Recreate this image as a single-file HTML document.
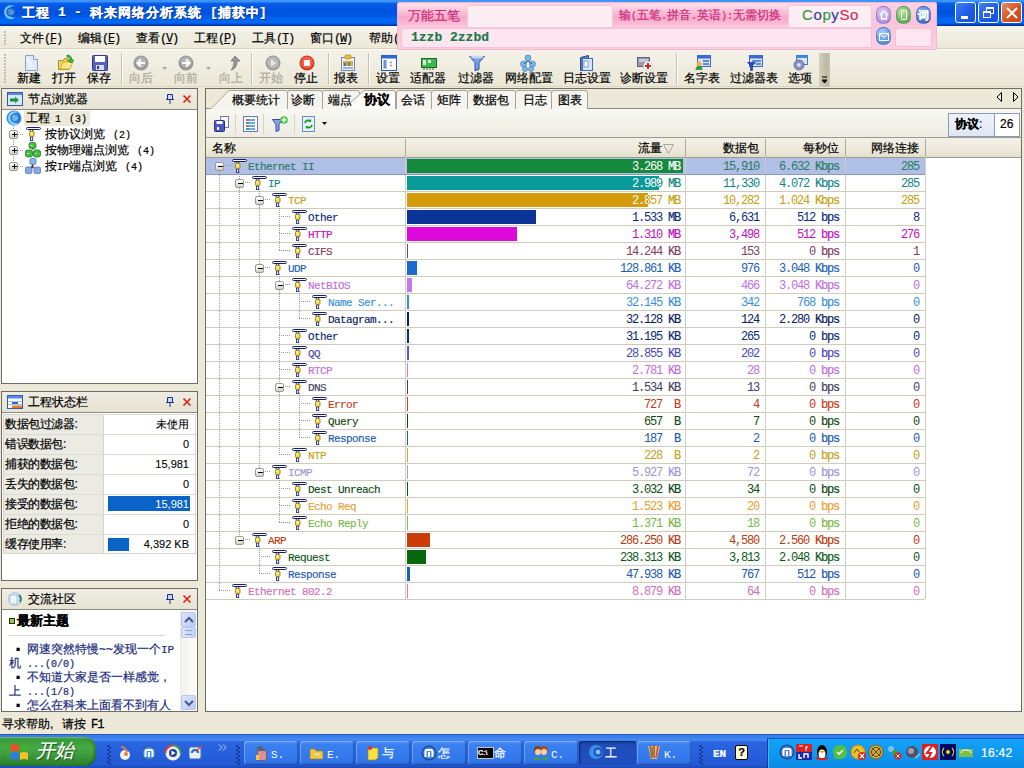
<!DOCTYPE html><html><head><meta charset="utf-8"><style>
*{margin:0;padding:0;box-sizing:border-box}
html,body{width:1024px;height:768px;overflow:hidden;background:#ece9d8;font-family:"Liberation Sans",sans-serif;font-size:12px;color:#000;position:relative;-webkit-text-stroke-width:0.2px}
.a{position:absolute;white-space:nowrap}
.m{font-family:"Liberation Mono",monospace;font-size:10px}
svg{position:absolute;overflow:visible}
.g{font-family:"Liberation Mono",monospace;font-size:12px;letter-spacing:-1.2px;-webkit-text-stroke-width:0}
.u{-webkit-text-stroke-width:0.2px}
.tn{font-family:"Liberation Mono",monospace;font-size:11px;letter-spacing:-0.6px;-webkit-text-stroke-width:0.15px}
</style></head><body><div class="a" style="left:0px;top:0px;width:1024px;height:27px;background:linear-gradient(#3c98fc 0px,#3a92fa 1.5px,#0a5ee8 3.5px,#0058e4 6px,#0052dc 13px,#005ae6 16px,#0066f2 19px,#0068f4 23px,#0044c8 24.5px,#0a2e98 26px,#f2f4ec 26px,#f2f4ec 27px)"></div>
<svg style="left:2px;top:4px" width="16" height="16" viewBox="0 0 16 16"><path d="M13 2.5A7 7 0 1 0 14 13A5.6 5.6 0 1 1 13 2.5z" fill="#6ac0fa"/><circle cx="9" cy="8" r="4.6" fill="#1a50c0"/><circle cx="9" cy="8" r="3.6" fill="#3a80e0"/><path d="M7 6.5h1.5M9 8.5h2M7.5 10h1" stroke="#90d0ff" stroke-width="1.2"/></svg>
<div class="a" style="left:22px;top:5px;font-size:13px;font-weight:bold;color:#fff;line-height:16px;text-shadow:1px 1px 0 #0a2a80;letter-spacing:1px">工程</div>
<div class="a" style="left:58px;top:5px;font-size:13px;font-weight:bold;color:#fff;line-height:16px;text-shadow:1px 1px 0 #0a2a80;font-family:'Liberation Mono',monospace;font-size:13px">1</div>
<div class="a" style="left:74px;top:5px;font-size:13px;font-weight:bold;color:#fff;line-height:16px;text-shadow:1px 1px 0 #0a2a80;font-family:'Liberation Mono',monospace;font-size:13px">-</div>
<div class="a" style="left:90px;top:5px;font-size:13px;font-weight:bold;color:#fff;line-height:16px;text-shadow:1px 1px 0 #0a2a80;letter-spacing:1px">科来网络分析系统</div>
<div class="a" style="left:210px;top:5px;font-size:13px;font-weight:bold;color:#fff;line-height:16px;text-shadow:1px 1px 0 #0a2a80;font-family:'Liberation Mono',monospace;font-size:13px">[</div>
<div class="a" style="left:218px;top:5px;font-size:13px;font-weight:bold;color:#fff;line-height:16px;text-shadow:1px 1px 0 #0a2a80;letter-spacing:1px">捕获中</div>
<div class="a" style="left:259px;top:5px;font-size:13px;font-weight:bold;color:#fff;line-height:16px;text-shadow:1px 1px 0 #0a2a80;font-family:'Liberation Mono',monospace;font-size:13px">]</div>
<div class="a" style="left:955px;top:2px;width:21px;height:21px;border:1px solid #fff;border-radius:3px;background:linear-gradient(135deg,#3c7ef8,#1c5ae8 60%,#1a50d8)"><div class="a" style="left:5px;top:13px;width:7px;height:3px;background:#fff"></div></div>
<div class="a" style="left:978px;top:2px;width:21px;height:21px;border:1px solid #fff;border-radius:3px;background:linear-gradient(135deg,#3c7ef8,#1c5ae8 60%,#1a50d8)"><div class="a" style="left:7px;top:4px;width:8px;height:7px;border:1px solid #fff;border-top-width:2px"></div><div class="a" style="left:4px;top:8px;width:8px;height:7px;border:1px solid #fff;border-top-width:2px;background:#2a62e8"></div></div>
<div class="a" style="left:1001px;top:2px;width:21px;height:21px;border:1px solid #fff;border-radius:3px;background:linear-gradient(135deg,#e88a6a,#d8521e 55%,#c84a18)"><svg style="left:4px;top:4px" width="12" height="12"><path d="M1 1L11 11M11 1L1 11" stroke="#fff" stroke-width="2"/></svg></div>
<div class="a" style="left:0px;top:27px;width:1024px;height:22px;background:linear-gradient(#f8f7f0,#f0eee2 30%,#ece9d8)"></div>
<div class="a" style="left:0px;top:48px;width:1024px;height:1px;background:#d8d4c2"></div>
<div class="a" style="left:0px;top:49px;width:1024px;height:1px;background:#fbfaf4"></div>
<div class="a" style="left:4px;top:31px;width:2px;height:2px;background:#c1bfb3"></div>
<div class="a" style="left:4px;top:34px;width:2px;height:2px;background:#c1bfb3"></div>
<div class="a" style="left:4px;top:37px;width:2px;height:2px;background:#c1bfb3"></div>
<div class="a" style="left:4px;top:40px;width:2px;height:2px;background:#c1bfb3"></div>
<div class="a" style="left:4px;top:43px;width:2px;height:2px;background:#c1bfb3"></div>
<div class="a" style="left:20px;top:31px;line-height:14px">文件<span class="m" style="font-size:12px;letter-spacing:-1.2px">(<u>F</u>)</span></div>
<div class="a" style="left:78px;top:31px;line-height:14px">编辑<span class="m" style="font-size:12px;letter-spacing:-1.2px">(<u>E</u>)</span></div>
<div class="a" style="left:136px;top:31px;line-height:14px">查看<span class="m" style="font-size:12px;letter-spacing:-1.2px">(<u>V</u>)</span></div>
<div class="a" style="left:194px;top:31px;line-height:14px">工程<span class="m" style="font-size:12px;letter-spacing:-1.2px">(<u>P</u>)</span></div>
<div class="a" style="left:252px;top:31px;line-height:14px">工具<span class="m" style="font-size:12px;letter-spacing:-1.2px">(<u>T</u>)</span></div>
<div class="a" style="left:310px;top:31px;line-height:14px">窗口<span class="m" style="font-size:12px;letter-spacing:-1.2px">(<u>W</u>)</span></div>
<div class="a" style="left:369px;top:31px;line-height:14px">帮助<span class="m" style="font-size:12px;letter-spacing:-1.2px">(<u>H</u>)</span></div>
<div class="a" style="left:0px;top:50px;width:1024px;height:38px;background:linear-gradient(#f4f2e8,#efecdf 50%,#eae7d5)"></div>
<div class="a" style="left:0px;top:86px;width:1024px;height:1px;background:#dcd8c6"></div>
<div class="a" style="left:4px;top:54px;width:2px;height:2px;background:#c1bfb3"></div>
<div class="a" style="left:4px;top:57px;width:2px;height:2px;background:#c1bfb3"></div>
<div class="a" style="left:4px;top:60px;width:2px;height:2px;background:#c1bfb3"></div>
<div class="a" style="left:4px;top:63px;width:2px;height:2px;background:#c1bfb3"></div>
<div class="a" style="left:4px;top:66px;width:2px;height:2px;background:#c1bfb3"></div>
<div class="a" style="left:4px;top:69px;width:2px;height:2px;background:#c1bfb3"></div>
<div class="a" style="left:4px;top:72px;width:2px;height:2px;background:#c1bfb3"></div>
<div class="a" style="left:4px;top:75px;width:2px;height:2px;background:#c1bfb3"></div>
<div class="a" style="left:4px;top:78px;width:2px;height:2px;background:#c1bfb3"></div>
<div class="a" style="left:4px;top:81px;width:2px;height:2px;background:#c1bfb3"></div>
<div class="a" style="left:121px;top:53px;width:1px;height:32px;background:#c5c2b2"></div>
<div class="a" style="left:122px;top:53px;width:1px;height:32px;background:#fff"></div>
<div class="a" style="left:251px;top:53px;width:1px;height:32px;background:#c5c2b2"></div>
<div class="a" style="left:252px;top:53px;width:1px;height:32px;background:#fff"></div>
<div class="a" style="left:328px;top:53px;width:1px;height:32px;background:#c5c2b2"></div>
<div class="a" style="left:329px;top:53px;width:1px;height:32px;background:#fff"></div>
<div class="a" style="left:368px;top:53px;width:1px;height:32px;background:#c5c2b2"></div>
<div class="a" style="left:369px;top:53px;width:1px;height:32px;background:#fff"></div>
<div class="a" style="left:676px;top:53px;width:1px;height:32px;background:#c5c2b2"></div>
<div class="a" style="left:677px;top:53px;width:1px;height:32px;background:#fff"></div>
<div class="a" style="left:819px;top:53px;width:11px;height:34px;background:linear-gradient(90deg,#d4d0bc,#bcb8a4 70%,#c8c4b0)"></div>
<svg style="left:821px;top:76px" width="8" height="8"><path d="M1 1h5M1 4l2.5 3l2.5-3z" stroke="#000" fill="#000" stroke-width="1"/></svg>
<svg style="left:23px;top:55px;" width="16" height="16" viewBox="0 0 16 16"><path d="M2.5 0.5h8l4 4v11h-12z" fill="#dfeaf8" stroke="#8aa0c8"/><path d="M10.5 0.5v4h4" fill="#fff" stroke="#8aa0c8"/><path d="M4 3l5 9" stroke="#fff" stroke-width="3" opacity=".6"/></svg>
<div class="a" style="left:17px;top:71px;line-height:14px;color:#000">新建</div>
<svg style="left:58px;top:55px;" width="16" height="16" viewBox="0 0 16 16"><path d="M0.5 5.5h5l1-2h3v3h4l-3 8h-10z" fill="#f2d35a" stroke="#b89020"/><path d="M2 14l3-7h10l-3 7z" fill="#f8e48a" stroke="#c8a030" stroke-width=".8"/><path d="M9 0c3 0 5 2 5 5h2l-3 3-3-3h2c0-2-1-3-3-3z" fill="#3cb83c" stroke="#1a7a1a" stroke-width=".6"/></svg>
<div class="a" style="left:52px;top:71px;line-height:14px;color:#000">打开</div>
<svg style="left:92px;top:55px;" width="16" height="16" viewBox="0 0 16 16"><rect x="0.5" y="0.5" width="15" height="15" rx="1" fill="#5860c0" stroke="#303890"/><rect x="3" y="1" width="10" height="6" fill="#fff"/><rect x="4" y="10" width="8" height="5" fill="#d8dcf0"/><rect x="5" y="11" width="2" height="3" fill="#303890"/></svg>
<div class="a" style="left:87px;top:71px;line-height:14px;color:#000">保存</div>
<svg style="left:133px;top:55px;opacity:.85;" width="16" height="16" viewBox="0 0 16 16"><circle cx="8" cy="8" r="7.5" fill="#8a8a8a"/><circle cx="8" cy="7" r="5.5" fill="#a8a8a8"/><path d="M12 8H5M8 4.5L4.5 8L8 11.5" stroke="#fff" stroke-width="2.2" fill="none"/></svg>
<div class="a" style="left:129px;top:71px;line-height:14px;color:#aca899">向后</div>
<svg style="left:178px;top:55px;opacity:.85;" width="16" height="16" viewBox="0 0 16 16"><circle cx="8" cy="8" r="7.5" fill="#8a8a8a"/><circle cx="8" cy="7" r="5.5" fill="#a8a8a8"/><path d="M4 8h7M8 4.5L11.5 8L8 11.5" stroke="#fff" stroke-width="2.2" fill="none"/></svg>
<div class="a" style="left:174px;top:71px;line-height:14px;color:#aca899">向前</div>
<svg style="left:225px;top:55px;opacity:.85;" width="16" height="16" viewBox="0 0 16 16"><path d="M10 1l5 5h-3c0 5-2 8-6 9 2-2 3-5 3-9H6z" fill="#8a8a8a" stroke="#505050" stroke-width=".7"/></svg>
<div class="a" style="left:219px;top:71px;line-height:14px;color:#aca899">向上</div>
<svg style="left:265px;top:55px;opacity:.85;" width="16" height="16" viewBox="0 0 16 16"><circle cx="8" cy="8" r="7.5" fill="#8c8c8c"/><circle cx="8" cy="7.5" r="6" fill="#b0b0b0"/><path d="M6 4.5v7l5.5-3.5z" fill="#e8e8e8"/></svg>
<div class="a" style="left:259px;top:71px;line-height:14px;color:#aca899">开始</div>
<svg style="left:299px;top:55px;" width="16" height="16" viewBox="0 0 16 16"><circle cx="8" cy="8" r="7.5" fill="#d83a20"/><circle cx="8" cy="7.5" r="6" fill="#f06040"/><rect x="5" y="5" width="6" height="6" fill="#fff" opacity=".95"/></svg>
<div class="a" style="left:294px;top:71px;line-height:14px;color:#000">停止</div>
<svg style="left:340px;top:55px;" width="16" height="16" viewBox="0 0 16 16"><rect x="1.5" y="2.5" width="13" height="13" fill="#eef4fc" stroke="#6a88b8"/><rect x="5" y="0" width="6" height="4" rx="1" fill="#f0c020" stroke="#a08010" stroke-width=".6"/><rect x="3" y="6" width="10" height="5" fill="#e8a050"/><rect x="4" y="8" width="2" height="3" fill="#4070d0"/><rect x="8" y="7" width="2" height="4" fill="#40a040"/><path d="M3 13h10" stroke="#4070c0"/></svg>
<div class="a" style="left:334px;top:71px;line-height:14px;color:#000">报表</div>
<svg style="left:381px;top:55px;" width="16" height="16" viewBox="0 0 16 16"><rect x="0.5" y="0.5" width="15" height="15" fill="#fff" stroke="#2a5ab8"/><rect x="0.5" y="0.5" width="15" height="3" fill="#2a6ad8"/><rect x="2" y="5" width="4" height="9" fill="#a8c8f0"/><path d="M3 6h2M3 8h2M3 10h2M3 12h2" stroke="#2a5ab8"/><path d="M9 7l2 1M9 10l2 1" stroke="#c04080"/></svg>
<div class="a" style="left:376px;top:71px;line-height:14px;color:#000">设置</div>
<svg style="left:421px;top:55px;" width="16" height="16" viewBox="0 0 16 16"><rect x="0.5" y="3.5" width="15" height="9" fill="#3cb84c" stroke="#1a6a2a"/><rect x="2" y="5" width="3" height="5" fill="#fff" opacity=".8"/><rect x="7" y="5" width="3" height="3" fill="#fff" opacity=".8"/><path d="M3 13v2M6 13v2M9 13v2M12 13v2" stroke="#1a6a2a"/></svg>
<div class="a" style="left:410px;top:71px;line-height:14px;color:#000">适配器</div>
<svg style="left:469px;top:55px;" width="16" height="16" viewBox="0 0 16 16"><path d="M0.5 1.5h15l-5.5 6v7l-4 1v-8z" fill="#7aa0e0" stroke="#2a4aa8"/><ellipse cx="8" cy="2" rx="7" ry="1.5" fill="#c8d8f8"/></svg>
<div class="a" style="left:458px;top:71px;line-height:14px;color:#000">过滤器</div>
<svg style="left:520px;top:55px;" width="16" height="16" viewBox="0 0 16 16"><circle cx="8" cy="3" r="3" fill="#7ab8e8" stroke="#3a70b0" stroke-width=".6"/><circle cx="3.5" cy="9" r="3" fill="#7ab8e8" stroke="#3a70b0" stroke-width=".6"/><circle cx="12.5" cy="9" r="3" fill="#7ab8e8" stroke="#3a70b0" stroke-width=".6"/><circle cx="5" cy="14" r="2.5" fill="#7ab8e8" stroke="#3a70b0" stroke-width=".6"/><circle cx="11" cy="14" r="2.5" fill="#7ab8e8" stroke="#3a70b0" stroke-width=".6"/><path d="M8 6L4 9M8 6l4 3" stroke="#305080"/></svg>
<div class="a" style="left:505px;top:71px;line-height:14px;color:#000">网络配置</div>
<svg style="left:578px;top:55px;" width="16" height="16" viewBox="0 0 16 16"><path d="M2.5 2.5l8-2v14l-8 1z" fill="#5a80c8" stroke="#2a4a90"/><rect x="4.5" y="3.5" width="10" height="12" fill="#d8e4f8" stroke="#4a6ab0"/><rect x="6" y="6" width="4" height="6" fill="#fff" stroke="#4a6ab0" stroke-width=".6"/></svg>
<div class="a" style="left:563px;top:71px;line-height:14px;color:#000">日志设置</div>
<svg style="left:637px;top:55px;" width="16" height="16" viewBox="0 0 16 16"><rect x="0.5" y="2.5" width="12" height="9" fill="#9898b0" stroke="#606080"/><rect x="2" y="4" width="9" height="3" fill="#c8c8d8"/><circle cx="11" cy="11" r="4.5" fill="#fff" stroke="#c0c0c0" stroke-width=".6"/><path d="M11 8v6M8 11h6" stroke="#e02020" stroke-width="2"/></svg>
<div class="a" style="left:620px;top:71px;line-height:14px;color:#000">诊断设置</div>
<svg style="left:695px;top:55px;" width="16" height="16" viewBox="0 0 16 16"><rect x="2.5" y="0.5" width="13" height="11" fill="#d8e4f8" stroke="#3a6ac8"/><rect x="2.5" y="0.5" width="13" height="3" fill="#3a6ad8"/><path d="M8 6h6M8 9h6" stroke="#3a6ac8" stroke-width="1.5"/><circle cx="4" cy="9" r="2.5" fill="#f0b040"/><path d="M0.5 15c0-3 1.5-4 3.5-4s3.5 1 3.5 4z" fill="#2aa040"/></svg>
<div class="a" style="left:684px;top:71px;line-height:14px;color:#000">名字表</div>
<svg style="left:747px;top:55px;" width="16" height="16" viewBox="0 0 16 16"><rect x="2.5" y="0.5" width="13" height="11" fill="#d8e4f8" stroke="#3a6ac8"/><rect x="2.5" y="0.5" width="13" height="3" fill="#3a6ad8"/><path d="M5 6h9M9 9h5" stroke="#3a6ac8" stroke-width="1.5"/><path d="M0.5 7.5h8l-3 3v5h-2v-5z" fill="#2a4ac8" stroke="#1a2a90" stroke-width=".6"/></svg>
<div class="a" style="left:730px;top:71px;line-height:14px;color:#000">过滤器表</div>
<svg style="left:792px;top:55px;" width="16" height="16" viewBox="0 0 16 16"><rect x="4.5" y="0.5" width="11" height="9" fill="#d8e8f8" stroke="#3a7ad8"/><rect x="4.5" y="0.5" width="11" height="2.5" fill="#3a8ae8"/><circle cx="7" cy="10" r="5" fill="#9090c8" stroke="#5a5a98" stroke-width=".8"/><circle cx="7" cy="10" r="1.8" fill="#e8e8f8"/></svg>
<div class="a" style="left:788px;top:71px;line-height:14px;color:#000">选项</div>
<svg style="left:162px;top:67px" width="6" height="4"><path d="M0 0h5l-2.5 3z" fill="#aca899"/></svg>
<svg style="left:206px;top:67px" width="6" height="4"><path d="M0 0h5l-2.5 3z" fill="#aca899"/></svg>
<div class="a" style="left:397px;top:2px;width:540px;height:48px;background:linear-gradient(#fbd3e3,#f9c4da 40%,#fbd0e2);border:1px solid #f4b8d0;border-radius:2px"></div>
<div class="a" style="left:398px;top:4px;width:69px;height:23px;background:linear-gradient(#fde0ec,#f7a9c9 60%,#fbc8dc)"></div>
<div class="a" style="left:408px;top:8px;font-size:13px;line-height:15px;color:#cc2a78">万能五笔</div>
<div class="a" style="left:467px;top:5px;width:146px;height:23px;background:#fdeef4;border:1px solid #f6c8da;border-radius:2px"></div>
<div class="a" style="left:613px;top:4px;width:175px;height:23px;background:linear-gradient(#fde0ec,#f7a9c9 60%,#fbc8dc)"></div>
<div class="a" style="left:619px;top:8px;font-size:12px;line-height:15px;color:#cc2a78">输<span class="m">(</span>五笔<span class="m">.</span>拼音<span class="m">.</span>英语<span class="m">):</span>无需切换</div>
<div class="a" style="left:788px;top:5px;width:84px;height:23px;background:#fdeef4;border:1px solid #f6c8da;border-radius:2px"></div>
<div class="a" style="left:802px;top:6px;font-size:15px;line-height:18px;letter-spacing:.6px"><span style="color:#3a9a3a">C</span><span style="color:#3a3ab0">o</span><span style="color:#3a9a3a">p</span><span style="color:#3a3ab0">y</span><span style="color:#d03050">S</span><span style="color:#d03050">o</span></div>
<div class="a" style="left:401px;top:28px;width:471px;height:20px;background:#fde6ef;border:1px solid #f6c0d6;border-radius:2px"></div>
<div class="a" style="left:411px;top:30px;font-family:'Liberation Mono',monospace;font-size:13px;font-weight:bold;line-height:15px;color:#1a7a4a">1zzb 2zzbd</div>
<div class="a" style="left:876px;top:6px;width:15px;height:18px;border-radius:7px;background:radial-gradient(circle at 40% 30%,#e0c8f8,#a080d8);border:1px solid rgba(80,80,160,.35)"><svg style="left:2px;top:3px" width="10" height="10"><path d="M1 5L5 1L9 5M2.5 4v5h5V4" stroke="#fff" stroke-width="1.4" fill="none"/></svg></div>
<div class="a" style="left:896px;top:6px;width:15px;height:18px;border-radius:7px;background:radial-gradient(circle at 40% 30%,#b8e8a0,#48a030);border:1px solid rgba(80,80,160,.35)"><div class="a" style="left:4px;top:3px;width:6px;height:10px;border:1.5px solid #fff;border-radius:1px"></div></div>
<div class="a" style="left:916px;top:6px;width:15px;height:18px;border-radius:7px;background:radial-gradient(circle at 40% 30%,#90b8f0,#2a5ab8);border:1px solid rgba(80,80,160,.35)"><div class="a" style="left:1px;top:1px;font-size:11px;line-height:14px;color:#fff;font-weight:bold">词</div></div>
<div class="a" style="left:876px;top:27px;width:15px;height:18px;border-radius:7px;background:radial-gradient(circle at 40% 30%,#a8d0f8,#3a7ad8);border:1px solid rgba(80,80,160,.35)"><svg style="left:2px;top:5px" width="10" height="8"><rect x=".5" y=".5" width="9" height="7" fill="none" stroke="#fff"/><path d="M.5 .5L5 4.5L9.5 .5" stroke="#fff" fill="none"/></svg></div>
<div class="a" style="left:895px;top:28px;width:37px;height:19px;background:#fde6ef;border:1px solid #f6c0d6;border-radius:2px"></div>
<div class="a" style="left:1px;top:88px;width:197px;height:296px;border:1px solid #6e6c64;background:#fff"></div>
<div class="a" style="left:2px;top:89px;width:195px;height:20px;background:linear-gradient(#efede3,#e6e3d3)"></div>
<div class="a" style="left:2px;top:109px;width:195px;height:1px;background:#8c8a7e"></div>
<svg style="left:7px;top:92px" width="16" height="14" viewBox="0 0 16 14"><rect x=".5" y=".5" width="15" height="13" fill="#d8e8f8" stroke="#3a5a98"/><rect x="1" y="1" width="14" height="2" fill="#5a8ad8"/><path d="M3 8h6" stroke="#1a8a3a" stroke-width="3"/><path d="M8 4.5l4 3.5-4 3.5z" fill="#1aa040"/></svg>
<div class="a" style="left:28px;top:92px;font-size:12px;line-height:14px;color:#000">节点浏览器</div>
<svg style="left:166px;top:94px" width="8" height="10"><path d="M1.5 .5h5v5h-5z" fill="#c8d8f0" stroke="#20308a"/><path d="M0 5.5h8M4 6v4" stroke="#20308a"/></svg>
<svg style="left:183px;top:95px" width="8" height="8"><path d="M.5 .5l7 7M7.5 .5l-7 7" stroke="#e02010" stroke-width="1.6"/></svg>
<div class="a" style="left:1px;top:391px;width:197px;height:190px;border:1px solid #6e6c64;background:#fff"></div>
<div class="a" style="left:2px;top:392px;width:195px;height:20px;background:linear-gradient(#efede3,#e6e3d3)"></div>
<div class="a" style="left:2px;top:412px;width:195px;height:1px;background:#8c8a7e"></div>
<svg style="left:7px;top:395px" width="16" height="14" viewBox="0 0 16 14"><rect x=".5" y=".5" width="15" height="13" fill="#fff" stroke="#3a5aa8"/><rect x="1" y="1" width="14" height="2.5" fill="#5a8ae8"/><path d="M1 6.5h14M1 9.5h14" stroke="#a8c0e8"/><rect x="5" y="7" width="6" height="2" fill="#2a6ad8"/><rect x="5" y="10.5" width="10" height="2.5" fill="#e87a20"/></svg>
<div class="a" style="left:28px;top:395px;font-size:12px;line-height:14px;color:#000">工程状态栏</div>
<svg style="left:166px;top:397px" width="8" height="10"><path d="M1.5 .5h5v5h-5z" fill="#c8d8f0" stroke="#20308a"/><path d="M0 5.5h8M4 6v4" stroke="#20308a"/></svg>
<svg style="left:183px;top:398px" width="8" height="8"><path d="M.5 .5l7 7M7.5 .5l-7 7" stroke="#e02010" stroke-width="1.6"/></svg>
<div class="a" style="left:1px;top:588px;width:197px;height:124px;border:1px solid #6e6c64;background:#fff"></div>
<div class="a" style="left:2px;top:589px;width:195px;height:20px;background:linear-gradient(#efede3,#e6e3d3)"></div>
<div class="a" style="left:2px;top:609px;width:195px;height:1px;background:#8c8a7e"></div>
<svg style="left:7px;top:592px" width="16" height="14" viewBox="0 0 16 14"><circle cx="8" cy="7" r="6.5" fill="#d0e0f8" stroke="#90b0d8" stroke-width=".6"/><rect x="3" y="3" width="7" height="9" fill="#f0f4fc" stroke="#8aa8d8" stroke-width=".6"/><path d="M12 3a6 6 0 0 1 1 7" stroke="#2a8a6a" stroke-width="2" fill="none"/></svg>
<div class="a" style="left:28px;top:592px;font-size:12px;line-height:14px;color:#000">交流社区</div>
<svg style="left:166px;top:594px" width="8" height="10"><path d="M1.5 .5h5v5h-5z" fill="#c8d8f0" stroke="#20308a"/><path d="M0 5.5h8M4 6v4" stroke="#20308a"/></svg>
<svg style="left:183px;top:595px" width="8" height="8"><path d="M.5 .5l7 7M7.5 .5l-7 7" stroke="#e02010" stroke-width="1.6"/></svg>
<svg style="left:6px;top:110px" width="16" height="16" viewBox="0 0 16 16"><circle cx="8" cy="8" r="7.5" fill="#2a8ae8"/><path d="M13 2.5A7 7 0 1 0 14 13A5.6 5.6 0 1 1 13 2.5z" fill="#8ad0fc"/><circle cx="9" cy="8" r="4.6" fill="#1a68d0"/><circle cx="9" cy="8" r="3.4" fill="#58a8f0"/><path d="M7 6.5h1.5M9 8.5h2M7.5 10h1" stroke="#c8ecff" stroke-width="1.2"/></svg>
<div class="a" style="left:24px;top:111px;width:66px;height:15px;background:#ece9d8"></div>
<div class="a" style="left:26px;top:111px;line-height:15px">工程</div>
<div class="a" style="left:55px;top:111px;line-height:15px"><span class="m">1</span></div>
<div class="a" style="left:69px;top:111px;line-height:15px"><span class="m">(3)</span></div>
<div class="a" style="left:13px;top:126px;width:1px;height:37px;background:repeating-linear-gradient(#a0a0a0 0 1px,transparent 1px 2px)"></div>
<div class="a" style="left:18px;top:134px;width:6px;height:1px;background:repeating-linear-gradient(90deg,#a0a0a0 0 1px,transparent 1px 2px)"></div>
<div class="a" style="left:9px;top:130px;width:9px;height:9px;border:1px solid #9a9a98;background:linear-gradient(#fff,#e4e4dc 60%,#cfcfc4);border-radius:2px"><div class="a" style="left:2px;top:3px;width:5px;height:1px;background:#000"></div><div class="a" style="left:4px;top:1px;width:1px;height:5px;background:#000"></div></div>
<svg style="left:26px;top:127px" width="15" height="14" viewBox="0 0 15 14"><rect x=".5" y=".5" width="14" height="2" rx="1" fill="#f4f8ff" stroke="#141e60"/><path d="M3.5 2.5L5 4.5M7.5 2.5L6 4.5" stroke="#141e60" stroke-width="1"/><rect x="4.5" y="10" width="2.2" height="3.5" fill="#e8f0ff" stroke="#20308a" stroke-width=".9"/><rect x="3.5" y="4.5" width="4.5" height="5" rx=".8" fill="#ecd452" stroke="#a88a18"/><rect x="4.5" y="5.5" width="2" height="2" fill="#fff6b0"/></svg>
<div class="a" style="left:45px;top:127px;line-height:15px">按协议浏览<span class="m" style="margin-left:8px">(2)</span></div>
<div class="a" style="left:18px;top:150px;width:6px;height:1px;background:repeating-linear-gradient(90deg,#a0a0a0 0 1px,transparent 1px 2px)"></div>
<div class="a" style="left:9px;top:146px;width:9px;height:9px;border:1px solid #9a9a98;background:linear-gradient(#fff,#e4e4dc 60%,#cfcfc4);border-radius:2px"><div class="a" style="left:2px;top:3px;width:5px;height:1px;background:#000"></div><div class="a" style="left:4px;top:1px;width:1px;height:5px;background:#000"></div></div>
<svg style="left:25px;top:142px" width="16" height="16" viewBox="0 0 16 16"><rect x="4" y="0.5" width="7" height="6" rx="2" fill="#40c040" stroke="#1a6a1a" stroke-width=".7"/><rect x=".5" y="8" width="7" height="7" rx="2" fill="#40c040" stroke="#1a6a1a" stroke-width=".7"/><rect x="8.5" y="8" width="7" height="7" rx="2" fill="#40c040" stroke="#1a6a1a" stroke-width=".7"/><path d="M5.5 3.5h2M2 11.5h2M10 11.5h2" stroke="#e8ffe8" stroke-width="1.2"/><path d="M8 6.5v1.5" stroke="#1a6a1a"/></svg>
<div class="a" style="left:45px;top:143px;line-height:15px">按物理端点浏览<span class="m" style="margin-left:8px">(4)</span></div>
<div class="a" style="left:18px;top:166px;width:6px;height:1px;background:repeating-linear-gradient(90deg,#a0a0a0 0 1px,transparent 1px 2px)"></div>
<div class="a" style="left:9px;top:162px;width:9px;height:9px;border:1px solid #9a9a98;background:linear-gradient(#fff,#e4e4dc 60%,#cfcfc4);border-radius:2px"><div class="a" style="left:2px;top:3px;width:5px;height:1px;background:#000"></div><div class="a" style="left:4px;top:1px;width:1px;height:5px;background:#000"></div></div>
<svg style="left:25px;top:158px" width="16" height="16" viewBox="0 0 16 16"><rect x="5" y="0.5" width="6" height="6" rx="1.5" fill="#80b8f0" stroke="#4070b8" stroke-width=".7"/><path d="M8 6.5v3L4 11M8 9.5l4 1.5" stroke="#804020" stroke-width="1"/><rect x=".5" y="9" width="6.5" height="6.5" rx="1.5" fill="#88a8e8" stroke="#4868b0" stroke-width=".7"/><rect x="9" y="9" width="6.5" height="6.5" rx="1.5" fill="#88a8e8" stroke="#4868b0" stroke-width=".7"/></svg>
<div class="a" style="left:45px;top:159px;line-height:15px">按<span class="m">IP</span>端点浏览<span class="m" style="margin-left:8px">(4)</span></div>
<div class="a" style="left:3px;top:414px;width:193px;height:140px;background:#fff;border:1px solid #d8d6cc"></div>
<div class="a" style="left:4px;top:415px;width:99px;height:138px;background:#ebeae3"></div>
<div class="a" style="left:103px;top:415px;width:1px;height:138px;background:#d8d6cc"></div>
<div class="a" style="left:5px;top:417px;line-height:15px;letter-spacing:-0.4px">数据包过滤器:</div>
<div class="a" style="left:109px;top:417px;width:80px;text-align:right;line-height:15px;font-size:11px;-webkit-text-stroke-width:.1px">未使用</div>
<div class="a" style="left:4px;top:434px;width:191px;height:1px;background:#dedcd2"></div>
<div class="a" style="left:5px;top:437px;line-height:15px;letter-spacing:-0.4px">错误数据包:</div>
<div class="a" style="left:109px;top:437px;width:80px;text-align:right;line-height:15px;font-size:11px;-webkit-text-stroke-width:.1px">0</div>
<div class="a" style="left:4px;top:454px;width:191px;height:1px;background:#dedcd2"></div>
<div class="a" style="left:5px;top:457px;line-height:15px;letter-spacing:-0.4px">捕获的数据包:</div>
<div class="a" style="left:109px;top:457px;width:80px;text-align:right;line-height:15px;font-size:11px;-webkit-text-stroke-width:.1px">15,981</div>
<div class="a" style="left:4px;top:474px;width:191px;height:1px;background:#dedcd2"></div>
<div class="a" style="left:5px;top:477px;line-height:15px;letter-spacing:-0.4px">丢失的数据包:</div>
<div class="a" style="left:109px;top:477px;width:80px;text-align:right;line-height:15px;font-size:11px;-webkit-text-stroke-width:.1px">0</div>
<div class="a" style="left:4px;top:494px;width:191px;height:1px;background:#dedcd2"></div>
<div class="a" style="left:5px;top:497px;line-height:15px;letter-spacing:-0.4px">接受的数据包:</div>
<div class="a" style="left:108px;top:496px;width:82px;height:15px;background:#0a64c8"></div>
<div class="a" style="left:109px;top:497px;width:80px;text-align:right;line-height:15px;color:#fff;font-size:11px;-webkit-text-stroke-width:0">15,981</div>
<div class="a" style="left:4px;top:514px;width:191px;height:1px;background:#dedcd2"></div>
<div class="a" style="left:5px;top:517px;line-height:15px;letter-spacing:-0.4px">拒绝的数据包:</div>
<div class="a" style="left:109px;top:517px;width:80px;text-align:right;line-height:15px;font-size:11px;-webkit-text-stroke-width:.1px">0</div>
<div class="a" style="left:4px;top:534px;width:191px;height:1px;background:#dedcd2"></div>
<div class="a" style="left:5px;top:537px;line-height:15px;letter-spacing:-0.4px">缓存使用率:</div>
<div class="a" style="left:108px;top:538px;width:21px;height:13px;background:#0a64c8"></div>
<div class="a" style="left:109px;top:537px;width:80px;text-align:right;line-height:15px;font-size:11px;-webkit-text-stroke-width:.1px">4,392 KB</div>
<div class="a" style="left:180px;top:610px;width:17px;height:101px;background:linear-gradient(90deg,#f3f1e8,#fdfdf8);border-left:1px solid #eeeadc"></div>
<div class="a" style="left:181px;top:612px;width:15px;height:15px;border:1px solid #b8c8f0;border-radius:2px;background:linear-gradient(135deg,#dce6fc,#b8ccf4)"><svg style="left:1px;top:3px" width="12" height="8"><path d="M2 6l4-4 4 4" stroke="#4a5a8a" stroke-width="2" fill="none"/></svg></div>
<div class="a" style="left:181px;top:695px;width:15px;height:15px;border:1px solid #b8c8f0;border-radius:2px;background:linear-gradient(135deg,#dce6fc,#b8ccf4)"><svg style="left:1px;top:3px" width="12" height="8"><path d="M2 2l4 4 4-4" stroke="#4a5a8a" stroke-width="2" fill="none"/></svg></div>
<div class="a" style="left:181px;top:627px;width:15px;height:11px;border:1px solid #b8c8f0;border-radius:2px;background:linear-gradient(90deg,#dce6fc,#c0d2f6)"><div class="a" style="left:3px;top:2px;width:7px;height:5px;border-top:1px solid #8aa0d0;border-bottom:1px solid #8aa0d0"></div></div>
<div class="a" style="left:9px;top:618px;width:6px;height:6px;background:#9ac840;border:1px solid #203010"></div>
<div class="a" style="left:17px;top:613px;font-size:13px;font-weight:bold;line-height:15px">最新主题</div>
<div class="a" style="left:8px;top:635px;width:157px;height:1px;background:#d8d8d8"></div>
<div class="a" style="left:2px;top:636px;width:177px;height:75px;overflow:hidden">
<div class="a" style="left:7px;top:6px;line-height:14px;padding-left:0"><span style="color:#000;display:inline-block;width:18px;text-align:center">▪</span><span style="color:#1a2a7a">网速突然特慢~~发现一个<span class="m" style="font-size:11px">IP</span></span></div>
<div class="a" style="left:7px;top:20px;line-height:14px;padding-left:0"><span style="color:#1a2a7a;display:inline-block;width:18px">机</span><span class="m" style="color:#1a2a7a;font-size:10px">...(0/0)</span></div>
<div class="a" style="left:7px;top:34px;line-height:14px;padding-left:0"><span style="color:#000;display:inline-block;width:18px;text-align:center">▪</span><span style="color:#1a2a7a">不知道大家是否一样感觉，</span></div>
<div class="a" style="left:7px;top:48px;line-height:14px;padding-left:0"><span style="color:#1a2a7a;display:inline-block;width:18px">上</span><span class="m" style="color:#1a2a7a;font-size:10px">...(1/8)</span></div>
<div class="a" style="left:7px;top:62px;line-height:14px;padding-left:0"><span style="color:#000;display:inline-block;width:18px;text-align:center">▪</span><span style="color:#1a2a7a">怎么在科来上面看不到有人</span></div>
</div>
<div class="a" style="left:2px;top:717px;line-height:15px">寻求帮助,</div>
<div class="a" style="left:62px;top:717px;line-height:15px">请按</div>
<div class="a" style="left:91px;top:717px;line-height:15px"><span class="m" style="font-size:12px;letter-spacing:-1px;-webkit-text-stroke-width:.3px">F1</span></div>
<div class="a" style="left:205px;top:88px;width:817px;height:624px;border:1px solid #6e6c64;background:#fff"></div>
<div class="a" style="left:206px;top:89px;width:815px;height:20px;background:#ece9d8"></div>
<div class="a" style="left:206px;top:108px;width:815px;height:1px;background:#8c8a7e"></div>
<svg style="left:206px;top:89px" width="400" height="21"><path d="M4.5 20L23 1.5H79q2.5 0 2.5 2.5V20" fill="#f5f4ee" stroke="#a6a498"/><path d="M81.5 20V4q0-2.5 2.5-2.5h30q2.5 0 2.5 2.5V20" fill="#f5f4ee" stroke="#a6a498"/><path d="M116.5 20V4q0-2.5 2.5-2.5h32q2.5 0 2.5 2.5V20" fill="#f5f4ee" stroke="#a6a498"/><path d="M190.5 20V4q0-2.5 2.5-2.5h30q2.5 0 2.5 2.5V20" fill="#f5f4ee" stroke="#a6a498"/><path d="M225.5 20V4q0-2.5 2.5-2.5h31q2.5 0 2.5 2.5V20" fill="#f5f4ee" stroke="#a6a498"/><path d="M261.5 20V4q0-2.5 2.5-2.5h43q2.5 0 2.5 2.5V20" fill="#f5f4ee" stroke="#a6a498"/><path d="M309.5 20V4q0-2.5 2.5-2.5h31q2.5 0 2.5 2.5V20" fill="#f5f4ee" stroke="#a6a498"/><path d="M345.5 20V4q0-2.5 2.5-2.5h31q2.5 0 2.5 2.5V20" fill="#f5f4ee" stroke="#a6a498"/><path d="M136.5 21L158 1.5H187q2.5 0 2.5 2.5V20" fill="#fcfcfa" stroke="#a6a498"/><path d="M137 20h52" stroke="#fcfcfa" stroke-width="2"/></svg>
<div class="a" style="left:232px;top:93px;line-height:14px">概要统计</div>
<div class="a" style="left:291px;top:93px;line-height:14px">诊断</div>
<div class="a" style="left:328px;top:93px;line-height:14px">端点</div>
<div class="a" style="left:364px;top:93px;line-height:14px;font-weight:bold;font-size:12.5px">协议</div>
<div class="a" style="left:401px;top:93px;line-height:14px">会话</div>
<div class="a" style="left:437px;top:93px;line-height:14px">矩阵</div>
<div class="a" style="left:473px;top:93px;line-height:14px">数据包</div>
<div class="a" style="left:523px;top:93px;line-height:14px">日志</div>
<div class="a" style="left:558px;top:93px;line-height:14px">图表</div>
<svg style="left:996px;top:92px" width="24" height="10"><path d="M5.5 .5v9l-4.5-4.5z" fill="none" stroke="#000"/><path d="M17.5 .5v9l4.5-4.5z" fill="none" stroke="#000"/></svg>
<div class="a" style="left:206px;top:109px;width:815px;height:28px;background:linear-gradient(#f8f7f1,#eeece2)"></div>
<div class="a" style="left:206px;top:137px;width:815px;height:1px;background:#9c9a8e"></div>
<svg style="left:214px;top:116px" width="16" height="16" viewBox="0 0 16 16"><rect x="6.5" y=".5" width="8" height="11" fill="#fff" stroke="#6a7ab8"/><rect x=".5" y="4.5" width="10" height="11" rx="1" fill="#4a58c0" stroke="#2a3088"/><rect x="2.5" y="5" width="6" height="3" fill="#fff"/><rect x="3" y="11" width="2" height="3" fill="#fff"/></svg>
<svg style="left:243px;top:116px" width="16" height="16" viewBox="0 0 16 16"><rect x=".5" y=".5" width="14" height="15" fill="#fff" stroke="#6a7ab8"/><path d="M3 4h9M3 7h9M3 10h9M3 13h9" stroke="#3a8ae0" stroke-width="1.5"/><path d="M3 4h3M3 10h3" stroke="#e05050" stroke-width="1.5"/><path d="M3 7h3M3 13h3" stroke="#30a050" stroke-width="1.5"/></svg>
<svg style="left:272px;top:116px" width="16" height="16" viewBox="0 0 16 16"><path d="M.5 3.5h10l-3.5 5v6l-3 1v-7z" fill="#8aa0e0" stroke="#2a4aa8"/><circle cx="12" cy="4" r="3.8" fill="#3ac83a"/><path d="M12 1.5v5M9.5 4h5" stroke="#fff" stroke-width="1.6"/></svg>
<svg style="left:302px;top:116px" width="16" height="16" viewBox="0 0 16 16"><rect x=".5" y=".5" width="12" height="15" fill="#e8f0fc" stroke="#6a8ac8"/><path d="M3 7a3.5 3.5 0 0 1 6-1.5M10 9a3.5 3.5 0 0 1-6 1.5" stroke="#1aa02a" stroke-width="1.8" fill="none"/><path d="M9 3v3h-3zM4 13v-3h3z" fill="#1aa02a"/></svg>
<div class="a" style="left:235px;top:114px;width:1px;height:20px;background:#d8d4c4"></div>
<div class="a" style="left:263px;top:114px;width:1px;height:20px;background:#d8d4c4"></div>
<div class="a" style="left:294px;top:114px;width:1px;height:20px;background:#d8d4c4"></div>
<svg style="left:322px;top:122px" width="6" height="4"><path d="M0 0h5l-2.5 3z" fill="#000"/></svg>
<div class="a" style="left:948px;top:113px;width:72px;height:24px;border:1px solid #8a9ab8;background:#fff"></div>
<div class="a" style="left:949px;top:114px;width:45px;height:22px;background:linear-gradient(#eef2fa,#dfe6f4)"></div>
<div class="a" style="left:994px;top:114px;width:1px;height:22px;background:#8a9ab8"></div>
<div class="a" style="left:955px;top:117px;font-weight:bold;line-height:15px">协议<span style="font-weight:normal">:</span></div>
<div class="a" style="left:1000px;top:117px;line-height:15px">26</div>
<div class="a" style="left:206px;top:138px;width:815px;height:19px;background:linear-gradient(#f3f1e6,#ebe8d9 70%,#e2dfcc)"></div>
<div class="a" style="left:206px;top:157px;width:815px;height:1px;background:#9c9a90"></div>
<div class="a" style="left:405px;top:139px;width:1px;height:18px;background:#b0ac9c"></div>
<div class="a" style="left:685px;top:139px;width:1px;height:18px;background:#b0ac9c"></div>
<div class="a" style="left:765px;top:139px;width:1px;height:18px;background:#b0ac9c"></div>
<div class="a" style="left:845px;top:139px;width:1px;height:18px;background:#b0ac9c"></div>
<div class="a" style="left:925px;top:139px;width:1px;height:18px;background:#b0ac9c"></div>
<div class="a" style="left:212px;top:141px;line-height:15px">名称</div>
<div class="a" style="left:562px;top:141px;width:100px;text-align:right;line-height:15px">流量</div>
<svg style="left:663px;top:144px" width="11" height="10"><path d="M.5 .5h10l-5 9z" fill="none" stroke="#a8a69a"/></svg>
<div class="a" style="left:659px;top:141px;width:100px;text-align:right;line-height:15px">数据包</div>
<div class="a" style="left:739px;top:141px;width:100px;text-align:right;line-height:15px">每秒位</div>
<div class="a" style="left:819px;top:141px;width:100px;text-align:right;line-height:15px">网络连接</div>
<div class="a" style="left:206px;top:158px;width:719px;height:16px;background:#b0bfe6"></div>
<div class="a" style="left:206px;top:174px;width:719px;height:1px;background:#cfcbbd"></div>
<div class="a" style="left:206px;top:191px;width:719px;height:1px;background:#cfcbbd"></div>
<div class="a" style="left:206px;top:208px;width:719px;height:1px;background:#cfcbbd"></div>
<div class="a" style="left:206px;top:225px;width:719px;height:1px;background:#cfcbbd"></div>
<div class="a" style="left:206px;top:242px;width:719px;height:1px;background:#cfcbbd"></div>
<div class="a" style="left:206px;top:259px;width:719px;height:1px;background:#cfcbbd"></div>
<div class="a" style="left:206px;top:276px;width:719px;height:1px;background:#cfcbbd"></div>
<div class="a" style="left:206px;top:293px;width:719px;height:1px;background:#cfcbbd"></div>
<div class="a" style="left:206px;top:310px;width:719px;height:1px;background:#cfcbbd"></div>
<div class="a" style="left:206px;top:327px;width:719px;height:1px;background:#cfcbbd"></div>
<div class="a" style="left:206px;top:344px;width:719px;height:1px;background:#cfcbbd"></div>
<div class="a" style="left:206px;top:361px;width:719px;height:1px;background:#cfcbbd"></div>
<div class="a" style="left:206px;top:378px;width:719px;height:1px;background:#cfcbbd"></div>
<div class="a" style="left:206px;top:395px;width:719px;height:1px;background:#cfcbbd"></div>
<div class="a" style="left:206px;top:412px;width:719px;height:1px;background:#cfcbbd"></div>
<div class="a" style="left:206px;top:429px;width:719px;height:1px;background:#cfcbbd"></div>
<div class="a" style="left:206px;top:446px;width:719px;height:1px;background:#cfcbbd"></div>
<div class="a" style="left:206px;top:463px;width:719px;height:1px;background:#cfcbbd"></div>
<div class="a" style="left:206px;top:480px;width:719px;height:1px;background:#cfcbbd"></div>
<div class="a" style="left:206px;top:497px;width:719px;height:1px;background:#cfcbbd"></div>
<div class="a" style="left:206px;top:514px;width:719px;height:1px;background:#cfcbbd"></div>
<div class="a" style="left:206px;top:531px;width:719px;height:1px;background:#cfcbbd"></div>
<div class="a" style="left:206px;top:548px;width:719px;height:1px;background:#cfcbbd"></div>
<div class="a" style="left:206px;top:565px;width:719px;height:1px;background:#cfcbbd"></div>
<div class="a" style="left:206px;top:582px;width:719px;height:1px;background:#cfcbbd"></div>
<div class="a" style="left:206px;top:599px;width:719px;height:1px;background:#cfcbbd"></div>
<div class="a" style="left:405px;top:157px;width:1px;height:442px;background:#d2cebf"></div>
<div class="a" style="left:685px;top:157px;width:1px;height:442px;background:#d2cebf"></div>
<div class="a" style="left:765px;top:157px;width:1px;height:442px;background:#d2cebf"></div>
<div class="a" style="left:845px;top:157px;width:1px;height:442px;background:#d2cebf"></div>
<div class="a" style="left:925px;top:157px;width:1px;height:442px;background:#d2cebf"></div>
<div class="a" style="left:206px;top:174px;width:719px;height:1px;background:#8a98c0"></div>
<div class="a" style="left:219px;top:165px;width:1px;height:425px;background:repeating-linear-gradient(#9a9a9a 0 1px,transparent 1px 2px)"></div>
<div class="a" style="left:239px;top:182px;width:1px;height:357px;background:repeating-linear-gradient(#9a9a9a 0 1px,transparent 1px 2px)"></div>
<div class="a" style="left:259px;top:199px;width:1px;height:68px;background:repeating-linear-gradient(#9a9a9a 0 1px,transparent 1px 2px)"></div>
<div class="a" style="left:279px;top:216px;width:1px;height:17px;background:repeating-linear-gradient(#9a9a9a 0 1px,transparent 1px 2px)"></div>
<div class="a" style="left:279px;top:233px;width:1px;height:17px;background:repeating-linear-gradient(#9a9a9a 0 1px,transparent 1px 2px)"></div>
<div class="a" style="left:259px;top:267px;width:1px;height:204px;background:repeating-linear-gradient(#9a9a9a 0 1px,transparent 1px 2px)"></div>
<div class="a" style="left:279px;top:284px;width:1px;height:51px;background:repeating-linear-gradient(#9a9a9a 0 1px,transparent 1px 2px)"></div>
<div class="a" style="left:299px;top:301px;width:1px;height:17px;background:repeating-linear-gradient(#9a9a9a 0 1px,transparent 1px 2px)"></div>
<div class="a" style="left:279px;top:335px;width:1px;height:17px;background:repeating-linear-gradient(#9a9a9a 0 1px,transparent 1px 2px)"></div>
<div class="a" style="left:279px;top:352px;width:1px;height:17px;background:repeating-linear-gradient(#9a9a9a 0 1px,transparent 1px 2px)"></div>
<div class="a" style="left:279px;top:369px;width:1px;height:17px;background:repeating-linear-gradient(#9a9a9a 0 1px,transparent 1px 2px)"></div>
<div class="a" style="left:279px;top:386px;width:1px;height:68px;background:repeating-linear-gradient(#9a9a9a 0 1px,transparent 1px 2px)"></div>
<div class="a" style="left:299px;top:403px;width:1px;height:17px;background:repeating-linear-gradient(#9a9a9a 0 1px,transparent 1px 2px)"></div>
<div class="a" style="left:299px;top:420px;width:1px;height:17px;background:repeating-linear-gradient(#9a9a9a 0 1px,transparent 1px 2px)"></div>
<div class="a" style="left:279px;top:488px;width:1px;height:17px;background:repeating-linear-gradient(#9a9a9a 0 1px,transparent 1px 2px)"></div>
<div class="a" style="left:279px;top:505px;width:1px;height:17px;background:repeating-linear-gradient(#9a9a9a 0 1px,transparent 1px 2px)"></div>
<div class="a" style="left:259px;top:556px;width:1px;height:17px;background:repeating-linear-gradient(#9a9a9a 0 1px,transparent 1px 2px)"></div>
<div class="a" style="left:239px;top:172px;width:1px;height:10px;background:repeating-linear-gradient(#9a9a9a 0 1px,transparent 1px 2px)"></div>
<div class="a" style="left:259px;top:189px;width:1px;height:10px;background:repeating-linear-gradient(#9a9a9a 0 1px,transparent 1px 2px)"></div>
<div class="a" style="left:279px;top:206px;width:1px;height:10px;background:repeating-linear-gradient(#9a9a9a 0 1px,transparent 1px 2px)"></div>
<div class="a" style="left:279px;top:274px;width:1px;height:10px;background:repeating-linear-gradient(#9a9a9a 0 1px,transparent 1px 2px)"></div>
<div class="a" style="left:299px;top:291px;width:1px;height:10px;background:repeating-linear-gradient(#9a9a9a 0 1px,transparent 1px 2px)"></div>
<div class="a" style="left:299px;top:393px;width:1px;height:10px;background:repeating-linear-gradient(#9a9a9a 0 1px,transparent 1px 2px)"></div>
<div class="a" style="left:279px;top:478px;width:1px;height:10px;background:repeating-linear-gradient(#9a9a9a 0 1px,transparent 1px 2px)"></div>
<div class="a" style="left:259px;top:546px;width:1px;height:10px;background:repeating-linear-gradient(#9a9a9a 0 1px,transparent 1px 2px)"></div>
<div class="a" style="left:219px;top:165px;width:11px;height:1px;background:repeating-linear-gradient(90deg,#9a9a9a 0 1px,transparent 1px 2px)"></div>
<div class="a" style="left:239px;top:182px;width:11px;height:1px;background:repeating-linear-gradient(90deg,#9a9a9a 0 1px,transparent 1px 2px)"></div>
<div class="a" style="left:259px;top:199px;width:11px;height:1px;background:repeating-linear-gradient(90deg,#9a9a9a 0 1px,transparent 1px 2px)"></div>
<div class="a" style="left:279px;top:216px;width:11px;height:1px;background:repeating-linear-gradient(90deg,#9a9a9a 0 1px,transparent 1px 2px)"></div>
<div class="a" style="left:279px;top:233px;width:11px;height:1px;background:repeating-linear-gradient(90deg,#9a9a9a 0 1px,transparent 1px 2px)"></div>
<div class="a" style="left:279px;top:250px;width:11px;height:1px;background:repeating-linear-gradient(90deg,#9a9a9a 0 1px,transparent 1px 2px)"></div>
<div class="a" style="left:259px;top:267px;width:11px;height:1px;background:repeating-linear-gradient(90deg,#9a9a9a 0 1px,transparent 1px 2px)"></div>
<div class="a" style="left:279px;top:284px;width:11px;height:1px;background:repeating-linear-gradient(90deg,#9a9a9a 0 1px,transparent 1px 2px)"></div>
<div class="a" style="left:299px;top:301px;width:11px;height:1px;background:repeating-linear-gradient(90deg,#9a9a9a 0 1px,transparent 1px 2px)"></div>
<div class="a" style="left:299px;top:318px;width:11px;height:1px;background:repeating-linear-gradient(90deg,#9a9a9a 0 1px,transparent 1px 2px)"></div>
<div class="a" style="left:279px;top:335px;width:11px;height:1px;background:repeating-linear-gradient(90deg,#9a9a9a 0 1px,transparent 1px 2px)"></div>
<div class="a" style="left:279px;top:352px;width:11px;height:1px;background:repeating-linear-gradient(90deg,#9a9a9a 0 1px,transparent 1px 2px)"></div>
<div class="a" style="left:279px;top:369px;width:11px;height:1px;background:repeating-linear-gradient(90deg,#9a9a9a 0 1px,transparent 1px 2px)"></div>
<div class="a" style="left:279px;top:386px;width:11px;height:1px;background:repeating-linear-gradient(90deg,#9a9a9a 0 1px,transparent 1px 2px)"></div>
<div class="a" style="left:299px;top:403px;width:11px;height:1px;background:repeating-linear-gradient(90deg,#9a9a9a 0 1px,transparent 1px 2px)"></div>
<div class="a" style="left:299px;top:420px;width:11px;height:1px;background:repeating-linear-gradient(90deg,#9a9a9a 0 1px,transparent 1px 2px)"></div>
<div class="a" style="left:299px;top:437px;width:11px;height:1px;background:repeating-linear-gradient(90deg,#9a9a9a 0 1px,transparent 1px 2px)"></div>
<div class="a" style="left:279px;top:454px;width:11px;height:1px;background:repeating-linear-gradient(90deg,#9a9a9a 0 1px,transparent 1px 2px)"></div>
<div class="a" style="left:259px;top:471px;width:11px;height:1px;background:repeating-linear-gradient(90deg,#9a9a9a 0 1px,transparent 1px 2px)"></div>
<div class="a" style="left:279px;top:488px;width:11px;height:1px;background:repeating-linear-gradient(90deg,#9a9a9a 0 1px,transparent 1px 2px)"></div>
<div class="a" style="left:279px;top:505px;width:11px;height:1px;background:repeating-linear-gradient(90deg,#9a9a9a 0 1px,transparent 1px 2px)"></div>
<div class="a" style="left:279px;top:522px;width:11px;height:1px;background:repeating-linear-gradient(90deg,#9a9a9a 0 1px,transparent 1px 2px)"></div>
<div class="a" style="left:239px;top:539px;width:11px;height:1px;background:repeating-linear-gradient(90deg,#9a9a9a 0 1px,transparent 1px 2px)"></div>
<div class="a" style="left:259px;top:556px;width:11px;height:1px;background:repeating-linear-gradient(90deg,#9a9a9a 0 1px,transparent 1px 2px)"></div>
<div class="a" style="left:259px;top:573px;width:11px;height:1px;background:repeating-linear-gradient(90deg,#9a9a9a 0 1px,transparent 1px 2px)"></div>
<div class="a" style="left:219px;top:590px;width:11px;height:1px;background:repeating-linear-gradient(90deg,#9a9a9a 0 1px,transparent 1px 2px)"></div>
<div class="a" style="left:215px;top:162px;width:9px;height:9px;border:1px solid #9a9a98;background:linear-gradient(#fff,#e4e4dc 60%,#cfcfc4);border-radius:2px"><div class="a" style="left:2px;top:3px;width:5px;height:1px;background:#000"></div></div>
<svg style="left:232px;top:159px" width="15" height="14" viewBox="0 0 15 14"><rect x=".5" y=".5" width="14" height="2" rx="1" fill="#f4f8ff" stroke="#141e60"/><path d="M3.5 2.5L5 4.5M7.5 2.5L6 4.5" stroke="#141e60" stroke-width="1"/><rect x="4.5" y="10" width="2.2" height="3.5" fill="#e8f0ff" stroke="#20308a" stroke-width=".9"/><rect x="3.5" y="4.5" width="4.5" height="5" rx=".8" fill="#ecd452" stroke="#a88a18"/><rect x="4.5" y="5.5" width="2" height="2" fill="#fff6b0"/></svg>
<div class="a tn" style="left:248px;top:161px;line-height:12px;color:#2a7a62">Ethernet&nbsp;II</div>
<div class="a g" style="left:580px;top:161px;width:100px;text-align:right;line-height:12px;color:#2a7a62">3.268&nbsp;<span class="u">MB</span></div>
<div class="a" style="left:407px;top:159px;width:276px;height:14px;background:#168a3c;overflow:hidden"><div class="a g" style="left:173px;top:2px;width:100px;text-align:right;line-height:12px;color:#fff">3.268&nbsp;<span class="u">MB</span></div></div>
<div class="a g" style="left:659px;top:161px;width:100px;text-align:right;line-height:12px;color:#2a7a62">15,910</div>
<div class="a g" style="left:739px;top:161px;width:100px;text-align:right;line-height:12px;color:#2a7a62">6.632&nbsp;<span class="u">Kbps</span></div>
<div class="a g" style="left:819px;top:161px;width:100px;text-align:right;line-height:12px;color:#2a7a62">285</div>
<div class="a" style="left:235px;top:179px;width:9px;height:9px;border:1px solid #9a9a98;background:linear-gradient(#fff,#e4e4dc 60%,#cfcfc4);border-radius:2px"><div class="a" style="left:2px;top:3px;width:5px;height:1px;background:#000"></div></div>
<svg style="left:252px;top:176px" width="15" height="14" viewBox="0 0 15 14"><rect x=".5" y=".5" width="14" height="2" rx="1" fill="#f4f8ff" stroke="#141e60"/><path d="M3.5 2.5L5 4.5M7.5 2.5L6 4.5" stroke="#141e60" stroke-width="1"/><rect x="4.5" y="10" width="2.2" height="3.5" fill="#e8f0ff" stroke="#20308a" stroke-width=".9"/><rect x="3.5" y="4.5" width="4.5" height="5" rx=".8" fill="#ecd452" stroke="#a88a18"/><rect x="4.5" y="5.5" width="2" height="2" fill="#fff6b0"/></svg>
<div class="a tn" style="left:268px;top:178px;line-height:12px;color:#128585">IP</div>
<div class="a g" style="left:580px;top:178px;width:100px;text-align:right;line-height:12px;color:#128585">2.989&nbsp;<span class="u">MB</span></div>
<div class="a" style="left:407px;top:176px;width:252px;height:14px;background:#0a9a9a;overflow:hidden"><div class="a g" style="left:173px;top:2px;width:100px;text-align:right;line-height:12px;color:#fff">2.989&nbsp;<span class="u">MB</span></div></div>
<div class="a g" style="left:659px;top:178px;width:100px;text-align:right;line-height:12px;color:#128585">11,330</div>
<div class="a g" style="left:739px;top:178px;width:100px;text-align:right;line-height:12px;color:#128585">4.072&nbsp;<span class="u">Kbps</span></div>
<div class="a g" style="left:819px;top:178px;width:100px;text-align:right;line-height:12px;color:#128585">285</div>
<div class="a" style="left:255px;top:196px;width:9px;height:9px;border:1px solid #9a9a98;background:linear-gradient(#fff,#e4e4dc 60%,#cfcfc4);border-radius:2px"><div class="a" style="left:2px;top:3px;width:5px;height:1px;background:#000"></div></div>
<svg style="left:272px;top:193px" width="15" height="14" viewBox="0 0 15 14"><rect x=".5" y=".5" width="14" height="2" rx="1" fill="#f4f8ff" stroke="#141e60"/><path d="M3.5 2.5L5 4.5M7.5 2.5L6 4.5" stroke="#141e60" stroke-width="1"/><rect x="4.5" y="10" width="2.2" height="3.5" fill="#e8f0ff" stroke="#20308a" stroke-width=".9"/><rect x="3.5" y="4.5" width="4.5" height="5" rx=".8" fill="#ecd452" stroke="#a88a18"/><rect x="4.5" y="5.5" width="2" height="2" fill="#fff6b0"/></svg>
<div class="a tn" style="left:288px;top:195px;line-height:12px;color:#c8a010">TCP</div>
<div class="a g" style="left:580px;top:195px;width:100px;text-align:right;line-height:12px;color:#c8a010">2.857&nbsp;<span class="u">MB</span></div>
<div class="a" style="left:407px;top:193px;width:241px;height:14px;background:#d49c0a;overflow:hidden"><div class="a g" style="left:173px;top:2px;width:100px;text-align:right;line-height:12px;color:#fff">2.857&nbsp;<span class="u">MB</span></div></div>
<div class="a g" style="left:659px;top:195px;width:100px;text-align:right;line-height:12px;color:#c8a010">10,282</div>
<div class="a g" style="left:739px;top:195px;width:100px;text-align:right;line-height:12px;color:#c8a010">1.024&nbsp;<span class="u">Kbps</span></div>
<div class="a g" style="left:819px;top:195px;width:100px;text-align:right;line-height:12px;color:#c8a010">285</div>
<svg style="left:292px;top:210px" width="15" height="14" viewBox="0 0 15 14"><rect x=".5" y=".5" width="14" height="2" rx="1" fill="#f4f8ff" stroke="#141e60"/><path d="M3.5 2.5L5 4.5M7.5 2.5L6 4.5" stroke="#141e60" stroke-width="1"/><rect x="4.5" y="10" width="2.2" height="3.5" fill="#e8f0ff" stroke="#20308a" stroke-width=".9"/><rect x="3.5" y="4.5" width="4.5" height="5" rx=".8" fill="#ecd452" stroke="#a88a18"/><rect x="4.5" y="5.5" width="2" height="2" fill="#fff6b0"/></svg>
<div class="a tn" style="left:308px;top:212px;line-height:12px;color:#0a2a78">Other</div>
<div class="a g" style="left:580px;top:212px;width:100px;text-align:right;line-height:12px;color:#0a2a78">1.533&nbsp;<span class="u">MB</span></div>
<div class="a" style="left:407px;top:210px;width:129px;height:14px;background:#0a3596;overflow:hidden"><div class="a g" style="left:173px;top:2px;width:100px;text-align:right;line-height:12px;color:#fff">1.533&nbsp;<span class="u">MB</span></div></div>
<div class="a g" style="left:659px;top:212px;width:100px;text-align:right;line-height:12px;color:#0a2a78">6,631</div>
<div class="a g" style="left:739px;top:212px;width:100px;text-align:right;line-height:12px;color:#0a2a78">512&nbsp;<span class="u">bps</span></div>
<div class="a g" style="left:819px;top:212px;width:100px;text-align:right;line-height:12px;color:#0a2a78">8</div>
<svg style="left:292px;top:227px" width="15" height="14" viewBox="0 0 15 14"><rect x=".5" y=".5" width="14" height="2" rx="1" fill="#f4f8ff" stroke="#141e60"/><path d="M3.5 2.5L5 4.5M7.5 2.5L6 4.5" stroke="#141e60" stroke-width="1"/><rect x="4.5" y="10" width="2.2" height="3.5" fill="#e8f0ff" stroke="#20308a" stroke-width=".9"/><rect x="3.5" y="4.5" width="4.5" height="5" rx=".8" fill="#ecd452" stroke="#a88a18"/><rect x="4.5" y="5.5" width="2" height="2" fill="#fff6b0"/></svg>
<div class="a tn" style="left:308px;top:229px;line-height:12px;color:#c010c0">HTTP</div>
<div class="a g" style="left:580px;top:229px;width:100px;text-align:right;line-height:12px;color:#c010c0">1.310&nbsp;<span class="u">MB</span></div>
<div class="a" style="left:407px;top:227px;width:110px;height:14px;background:#dc08dc;overflow:hidden"><div class="a g" style="left:173px;top:2px;width:100px;text-align:right;line-height:12px;color:#fff">1.310&nbsp;<span class="u">MB</span></div></div>
<div class="a g" style="left:659px;top:229px;width:100px;text-align:right;line-height:12px;color:#c010c0">3,498</div>
<div class="a g" style="left:739px;top:229px;width:100px;text-align:right;line-height:12px;color:#c010c0">512&nbsp;<span class="u">bps</span></div>
<div class="a g" style="left:819px;top:229px;width:100px;text-align:right;line-height:12px;color:#c010c0">276</div>
<svg style="left:292px;top:244px" width="15" height="14" viewBox="0 0 15 14"><rect x=".5" y=".5" width="14" height="2" rx="1" fill="#f4f8ff" stroke="#141e60"/><path d="M3.5 2.5L5 4.5M7.5 2.5L6 4.5" stroke="#141e60" stroke-width="1"/><rect x="4.5" y="10" width="2.2" height="3.5" fill="#e8f0ff" stroke="#20308a" stroke-width=".9"/><rect x="3.5" y="4.5" width="4.5" height="5" rx=".8" fill="#ecd452" stroke="#a88a18"/><rect x="4.5" y="5.5" width="2" height="2" fill="#fff6b0"/></svg>
<div class="a tn" style="left:308px;top:246px;line-height:12px;color:#804060">CIFS</div>
<div class="a g" style="left:580px;top:246px;width:100px;text-align:right;line-height:12px;color:#804060">14.244&nbsp;<span class="u">KB</span></div>
<div class="a" style="left:407px;top:244px;width:1px;height:14px;background:#804060;overflow:hidden"><div class="a g" style="left:173px;top:2px;width:100px;text-align:right;line-height:12px;color:#fff">14.244&nbsp;<span class="u">KB</span></div></div>
<div class="a g" style="left:659px;top:246px;width:100px;text-align:right;line-height:12px;color:#804060">153</div>
<div class="a g" style="left:739px;top:246px;width:100px;text-align:right;line-height:12px;color:#804060">0&nbsp;<span class="u">bps</span></div>
<div class="a g" style="left:819px;top:246px;width:100px;text-align:right;line-height:12px;color:#804060">1</div>
<div class="a" style="left:255px;top:264px;width:9px;height:9px;border:1px solid #9a9a98;background:linear-gradient(#fff,#e4e4dc 60%,#cfcfc4);border-radius:2px"><div class="a" style="left:2px;top:3px;width:5px;height:1px;background:#000"></div></div>
<svg style="left:272px;top:261px" width="15" height="14" viewBox="0 0 15 14"><rect x=".5" y=".5" width="14" height="2" rx="1" fill="#f4f8ff" stroke="#141e60"/><path d="M3.5 2.5L5 4.5M7.5 2.5L6 4.5" stroke="#141e60" stroke-width="1"/><rect x="4.5" y="10" width="2.2" height="3.5" fill="#e8f0ff" stroke="#20308a" stroke-width=".9"/><rect x="3.5" y="4.5" width="4.5" height="5" rx=".8" fill="#ecd452" stroke="#a88a18"/><rect x="4.5" y="5.5" width="2" height="2" fill="#fff6b0"/></svg>
<div class="a tn" style="left:288px;top:263px;line-height:12px;color:#1a60b8">UDP</div>
<div class="a g" style="left:580px;top:263px;width:100px;text-align:right;line-height:12px;color:#1a60b8">128.861&nbsp;<span class="u">KB</span></div>
<div class="a" style="left:407px;top:261px;width:10px;height:14px;background:#1a6ad0;overflow:hidden"><div class="a g" style="left:173px;top:2px;width:100px;text-align:right;line-height:12px;color:#fff">128.861&nbsp;<span class="u">KB</span></div></div>
<div class="a g" style="left:659px;top:263px;width:100px;text-align:right;line-height:12px;color:#1a60b8">976</div>
<div class="a g" style="left:739px;top:263px;width:100px;text-align:right;line-height:12px;color:#1a60b8">3.048&nbsp;<span class="u">Kbps</span></div>
<div class="a g" style="left:819px;top:263px;width:100px;text-align:right;line-height:12px;color:#1a60b8">0</div>
<div class="a" style="left:275px;top:281px;width:9px;height:9px;border:1px solid #9a9a98;background:linear-gradient(#fff,#e4e4dc 60%,#cfcfc4);border-radius:2px"><div class="a" style="left:2px;top:3px;width:5px;height:1px;background:#000"></div></div>
<svg style="left:292px;top:278px" width="15" height="14" viewBox="0 0 15 14"><rect x=".5" y=".5" width="14" height="2" rx="1" fill="#f4f8ff" stroke="#141e60"/><path d="M3.5 2.5L5 4.5M7.5 2.5L6 4.5" stroke="#141e60" stroke-width="1"/><rect x="4.5" y="10" width="2.2" height="3.5" fill="#e8f0ff" stroke="#20308a" stroke-width=".9"/><rect x="3.5" y="4.5" width="4.5" height="5" rx=".8" fill="#ecd452" stroke="#a88a18"/><rect x="4.5" y="5.5" width="2" height="2" fill="#fff6b0"/></svg>
<div class="a tn" style="left:308px;top:280px;line-height:12px;color:#c070e0">NetBIOS</div>
<div class="a g" style="left:580px;top:280px;width:100px;text-align:right;line-height:12px;color:#c070e0">64.272&nbsp;<span class="u">KB</span></div>
<div class="a" style="left:407px;top:278px;width:5px;height:14px;background:#c878ee;overflow:hidden"><div class="a g" style="left:173px;top:2px;width:100px;text-align:right;line-height:12px;color:#fff">64.272&nbsp;<span class="u">KB</span></div></div>
<div class="a g" style="left:659px;top:280px;width:100px;text-align:right;line-height:12px;color:#c070e0">466</div>
<div class="a g" style="left:739px;top:280px;width:100px;text-align:right;line-height:12px;color:#c070e0">3.048&nbsp;<span class="u">Kbps</span></div>
<div class="a g" style="left:819px;top:280px;width:100px;text-align:right;line-height:12px;color:#c070e0">0</div>
<svg style="left:312px;top:295px" width="15" height="14" viewBox="0 0 15 14"><rect x=".5" y=".5" width="14" height="2" rx="1" fill="#f4f8ff" stroke="#141e60"/><path d="M3.5 2.5L5 4.5M7.5 2.5L6 4.5" stroke="#141e60" stroke-width="1"/><rect x="4.5" y="10" width="2.2" height="3.5" fill="#e8f0ff" stroke="#20308a" stroke-width=".9"/><rect x="3.5" y="4.5" width="4.5" height="5" rx=".8" fill="#ecd452" stroke="#a88a18"/><rect x="4.5" y="5.5" width="2" height="2" fill="#fff6b0"/></svg>
<div class="a tn" style="left:328px;top:297px;line-height:12px;color:#3a90d8">Name&nbsp;Ser...</div>
<div class="a g" style="left:580px;top:297px;width:100px;text-align:right;line-height:12px;color:#3a90d8">32.145&nbsp;<span class="u">KB</span></div>
<div class="a" style="left:407px;top:295px;width:2px;height:14px;background:#3a90d8;overflow:hidden"><div class="a g" style="left:173px;top:2px;width:100px;text-align:right;line-height:12px;color:#fff">32.145&nbsp;<span class="u">KB</span></div></div>
<div class="a g" style="left:659px;top:297px;width:100px;text-align:right;line-height:12px;color:#3a90d8">342</div>
<div class="a g" style="left:739px;top:297px;width:100px;text-align:right;line-height:12px;color:#3a90d8">768&nbsp;<span class="u">bps</span></div>
<div class="a g" style="left:819px;top:297px;width:100px;text-align:right;line-height:12px;color:#3a90d8">0</div>
<svg style="left:312px;top:312px" width="15" height="14" viewBox="0 0 15 14"><rect x=".5" y=".5" width="14" height="2" rx="1" fill="#f4f8ff" stroke="#141e60"/><path d="M3.5 2.5L5 4.5M7.5 2.5L6 4.5" stroke="#141e60" stroke-width="1"/><rect x="4.5" y="10" width="2.2" height="3.5" fill="#e8f0ff" stroke="#20308a" stroke-width=".9"/><rect x="3.5" y="4.5" width="4.5" height="5" rx=".8" fill="#ecd452" stroke="#a88a18"/><rect x="4.5" y="5.5" width="2" height="2" fill="#fff6b0"/></svg>
<div class="a tn" style="left:328px;top:314px;line-height:12px;color:#0a2060">Datagram...</div>
<div class="a g" style="left:580px;top:314px;width:100px;text-align:right;line-height:12px;color:#0a2060">32.128&nbsp;<span class="u">KB</span></div>
<div class="a" style="left:407px;top:312px;width:2px;height:14px;background:#0a2060;overflow:hidden"><div class="a g" style="left:173px;top:2px;width:100px;text-align:right;line-height:12px;color:#fff">32.128&nbsp;<span class="u">KB</span></div></div>
<div class="a g" style="left:659px;top:314px;width:100px;text-align:right;line-height:12px;color:#0a2060">124</div>
<div class="a g" style="left:739px;top:314px;width:100px;text-align:right;line-height:12px;color:#0a2060">2.280&nbsp;<span class="u">Kbps</span></div>
<div class="a g" style="left:819px;top:314px;width:100px;text-align:right;line-height:12px;color:#0a2060">0</div>
<svg style="left:292px;top:329px" width="15" height="14" viewBox="0 0 15 14"><rect x=".5" y=".5" width="14" height="2" rx="1" fill="#f4f8ff" stroke="#141e60"/><path d="M3.5 2.5L5 4.5M7.5 2.5L6 4.5" stroke="#141e60" stroke-width="1"/><rect x="4.5" y="10" width="2.2" height="3.5" fill="#e8f0ff" stroke="#20308a" stroke-width=".9"/><rect x="3.5" y="4.5" width="4.5" height="5" rx=".8" fill="#ecd452" stroke="#a88a18"/><rect x="4.5" y="5.5" width="2" height="2" fill="#fff6b0"/></svg>
<div class="a tn" style="left:308px;top:331px;line-height:12px;color:#0a2a70">Other</div>
<div class="a g" style="left:580px;top:331px;width:100px;text-align:right;line-height:12px;color:#0a2a70">31.195&nbsp;<span class="u">KB</span></div>
<div class="a" style="left:407px;top:329px;width:2px;height:14px;background:#0a2a70;overflow:hidden"><div class="a g" style="left:173px;top:2px;width:100px;text-align:right;line-height:12px;color:#fff">31.195&nbsp;<span class="u">KB</span></div></div>
<div class="a g" style="left:659px;top:331px;width:100px;text-align:right;line-height:12px;color:#0a2a70">265</div>
<div class="a g" style="left:739px;top:331px;width:100px;text-align:right;line-height:12px;color:#0a2a70">0&nbsp;<span class="u">bps</span></div>
<div class="a g" style="left:819px;top:331px;width:100px;text-align:right;line-height:12px;color:#0a2a70">0</div>
<svg style="left:292px;top:346px" width="15" height="14" viewBox="0 0 15 14"><rect x=".5" y=".5" width="14" height="2" rx="1" fill="#f4f8ff" stroke="#141e60"/><path d="M3.5 2.5L5 4.5M7.5 2.5L6 4.5" stroke="#141e60" stroke-width="1"/><rect x="4.5" y="10" width="2.2" height="3.5" fill="#e8f0ff" stroke="#20308a" stroke-width=".9"/><rect x="3.5" y="4.5" width="4.5" height="5" rx=".8" fill="#ecd452" stroke="#a88a18"/><rect x="4.5" y="5.5" width="2" height="2" fill="#fff6b0"/></svg>
<div class="a tn" style="left:308px;top:348px;line-height:12px;color:#4a4ab0">QQ</div>
<div class="a g" style="left:580px;top:348px;width:100px;text-align:right;line-height:12px;color:#4a4ab0">28.855&nbsp;<span class="u">KB</span></div>
<div class="a" style="left:407px;top:346px;width:2px;height:14px;background:#5a5ac0;overflow:hidden"><div class="a g" style="left:173px;top:2px;width:100px;text-align:right;line-height:12px;color:#fff">28.855&nbsp;<span class="u">KB</span></div></div>
<div class="a g" style="left:659px;top:348px;width:100px;text-align:right;line-height:12px;color:#4a4ab0">202</div>
<div class="a g" style="left:739px;top:348px;width:100px;text-align:right;line-height:12px;color:#4a4ab0">0&nbsp;<span class="u">bps</span></div>
<div class="a g" style="left:819px;top:348px;width:100px;text-align:right;line-height:12px;color:#4a4ab0">0</div>
<svg style="left:292px;top:363px" width="15" height="14" viewBox="0 0 15 14"><rect x=".5" y=".5" width="14" height="2" rx="1" fill="#f4f8ff" stroke="#141e60"/><path d="M3.5 2.5L5 4.5M7.5 2.5L6 4.5" stroke="#141e60" stroke-width="1"/><rect x="4.5" y="10" width="2.2" height="3.5" fill="#e8f0ff" stroke="#20308a" stroke-width=".9"/><rect x="3.5" y="4.5" width="4.5" height="5" rx=".8" fill="#ecd452" stroke="#a88a18"/><rect x="4.5" y="5.5" width="2" height="2" fill="#fff6b0"/></svg>
<div class="a tn" style="left:308px;top:365px;line-height:12px;color:#c070d8">RTCP</div>
<div class="a g" style="left:580px;top:365px;width:100px;text-align:right;line-height:12px;color:#c070d8">2.781&nbsp;<span class="u">KB</span></div>
<div class="a" style="left:407px;top:363px;width:1px;height:14px;background:#c878e0;overflow:hidden"><div class="a g" style="left:173px;top:2px;width:100px;text-align:right;line-height:12px;color:#fff">2.781&nbsp;<span class="u">KB</span></div></div>
<div class="a g" style="left:659px;top:365px;width:100px;text-align:right;line-height:12px;color:#c070d8">28</div>
<div class="a g" style="left:739px;top:365px;width:100px;text-align:right;line-height:12px;color:#c070d8">0&nbsp;<span class="u">bps</span></div>
<div class="a g" style="left:819px;top:365px;width:100px;text-align:right;line-height:12px;color:#c070d8">0</div>
<div class="a" style="left:275px;top:383px;width:9px;height:9px;border:1px solid #9a9a98;background:linear-gradient(#fff,#e4e4dc 60%,#cfcfc4);border-radius:2px"><div class="a" style="left:2px;top:3px;width:5px;height:1px;background:#000"></div></div>
<svg style="left:292px;top:380px" width="15" height="14" viewBox="0 0 15 14"><rect x=".5" y=".5" width="14" height="2" rx="1" fill="#f4f8ff" stroke="#141e60"/><path d="M3.5 2.5L5 4.5M7.5 2.5L6 4.5" stroke="#141e60" stroke-width="1"/><rect x="4.5" y="10" width="2.2" height="3.5" fill="#e8f0ff" stroke="#20308a" stroke-width=".9"/><rect x="3.5" y="4.5" width="4.5" height="5" rx=".8" fill="#ecd452" stroke="#a88a18"/><rect x="4.5" y="5.5" width="2" height="2" fill="#fff6b0"/></svg>
<div class="a tn" style="left:308px;top:382px;line-height:12px;color:#404060">DNS</div>
<div class="a g" style="left:580px;top:382px;width:100px;text-align:right;line-height:12px;color:#404060">1.534&nbsp;<span class="u">KB</span></div>
<div class="a" style="left:407px;top:380px;width:1px;height:14px;background:#404060;overflow:hidden"><div class="a g" style="left:173px;top:2px;width:100px;text-align:right;line-height:12px;color:#fff">1.534&nbsp;<span class="u">KB</span></div></div>
<div class="a g" style="left:659px;top:382px;width:100px;text-align:right;line-height:12px;color:#404060">13</div>
<div class="a g" style="left:739px;top:382px;width:100px;text-align:right;line-height:12px;color:#404060">0&nbsp;<span class="u">bps</span></div>
<div class="a g" style="left:819px;top:382px;width:100px;text-align:right;line-height:12px;color:#404060">0</div>
<svg style="left:312px;top:397px" width="15" height="14" viewBox="0 0 15 14"><rect x=".5" y=".5" width="14" height="2" rx="1" fill="#f4f8ff" stroke="#141e60"/><path d="M3.5 2.5L5 4.5M7.5 2.5L6 4.5" stroke="#141e60" stroke-width="1"/><rect x="4.5" y="10" width="2.2" height="3.5" fill="#e8f0ff" stroke="#20308a" stroke-width=".9"/><rect x="3.5" y="4.5" width="4.5" height="5" rx=".8" fill="#ecd452" stroke="#a88a18"/><rect x="4.5" y="5.5" width="2" height="2" fill="#fff6b0"/></svg>
<div class="a tn" style="left:328px;top:399px;line-height:12px;color:#c83818">Error</div>
<div class="a g" style="left:580px;top:399px;width:100px;text-align:right;line-height:12px;color:#c83818">727&nbsp;<span class="u">&nbsp;B</span></div>
<div class="a" style="left:407px;top:397px;width:1px;height:14px;background:#d84020;overflow:hidden"><div class="a g" style="left:173px;top:2px;width:100px;text-align:right;line-height:12px;color:#fff">727&nbsp;<span class="u">&nbsp;B</span></div></div>
<div class="a g" style="left:659px;top:399px;width:100px;text-align:right;line-height:12px;color:#c83818">4</div>
<div class="a g" style="left:739px;top:399px;width:100px;text-align:right;line-height:12px;color:#c83818">0&nbsp;<span class="u">bps</span></div>
<div class="a g" style="left:819px;top:399px;width:100px;text-align:right;line-height:12px;color:#c83818">0</div>
<svg style="left:312px;top:414px" width="15" height="14" viewBox="0 0 15 14"><rect x=".5" y=".5" width="14" height="2" rx="1" fill="#f4f8ff" stroke="#141e60"/><path d="M3.5 2.5L5 4.5M7.5 2.5L6 4.5" stroke="#141e60" stroke-width="1"/><rect x="4.5" y="10" width="2.2" height="3.5" fill="#e8f0ff" stroke="#20308a" stroke-width=".9"/><rect x="3.5" y="4.5" width="4.5" height="5" rx=".8" fill="#ecd452" stroke="#a88a18"/><rect x="4.5" y="5.5" width="2" height="2" fill="#fff6b0"/></svg>
<div class="a tn" style="left:328px;top:416px;line-height:12px;color:#104a10">Query</div>
<div class="a g" style="left:580px;top:416px;width:100px;text-align:right;line-height:12px;color:#104a10">657&nbsp;<span class="u">&nbsp;B</span></div>
<div class="a" style="left:407px;top:414px;width:1px;height:14px;background:#104a10;overflow:hidden"><div class="a g" style="left:173px;top:2px;width:100px;text-align:right;line-height:12px;color:#fff">657&nbsp;<span class="u">&nbsp;B</span></div></div>
<div class="a g" style="left:659px;top:416px;width:100px;text-align:right;line-height:12px;color:#104a10">7</div>
<div class="a g" style="left:739px;top:416px;width:100px;text-align:right;line-height:12px;color:#104a10">0&nbsp;<span class="u">bps</span></div>
<div class="a g" style="left:819px;top:416px;width:100px;text-align:right;line-height:12px;color:#104a10">0</div>
<svg style="left:312px;top:431px" width="15" height="14" viewBox="0 0 15 14"><rect x=".5" y=".5" width="14" height="2" rx="1" fill="#f4f8ff" stroke="#141e60"/><path d="M3.5 2.5L5 4.5M7.5 2.5L6 4.5" stroke="#141e60" stroke-width="1"/><rect x="4.5" y="10" width="2.2" height="3.5" fill="#e8f0ff" stroke="#20308a" stroke-width=".9"/><rect x="3.5" y="4.5" width="4.5" height="5" rx=".8" fill="#ecd452" stroke="#a88a18"/><rect x="4.5" y="5.5" width="2" height="2" fill="#fff6b0"/></svg>
<div class="a tn" style="left:328px;top:433px;line-height:12px;color:#1a5aa8">Response</div>
<div class="a g" style="left:580px;top:433px;width:100px;text-align:right;line-height:12px;color:#1a5aa8">187&nbsp;<span class="u">&nbsp;B</span></div>
<div class="a" style="left:407px;top:431px;width:1px;height:14px;background:#1a5aa8;overflow:hidden"><div class="a g" style="left:173px;top:2px;width:100px;text-align:right;line-height:12px;color:#fff">187&nbsp;<span class="u">&nbsp;B</span></div></div>
<div class="a g" style="left:659px;top:433px;width:100px;text-align:right;line-height:12px;color:#1a5aa8">2</div>
<div class="a g" style="left:739px;top:433px;width:100px;text-align:right;line-height:12px;color:#1a5aa8">0&nbsp;<span class="u">bps</span></div>
<div class="a g" style="left:819px;top:433px;width:100px;text-align:right;line-height:12px;color:#1a5aa8">0</div>
<svg style="left:292px;top:448px" width="15" height="14" viewBox="0 0 15 14"><rect x=".5" y=".5" width="14" height="2" rx="1" fill="#f4f8ff" stroke="#141e60"/><path d="M3.5 2.5L5 4.5M7.5 2.5L6 4.5" stroke="#141e60" stroke-width="1"/><rect x="4.5" y="10" width="2.2" height="3.5" fill="#e8f0ff" stroke="#20308a" stroke-width=".9"/><rect x="3.5" y="4.5" width="4.5" height="5" rx=".8" fill="#ecd452" stroke="#a88a18"/><rect x="4.5" y="5.5" width="2" height="2" fill="#fff6b0"/></svg>
<div class="a tn" style="left:308px;top:450px;line-height:12px;color:#c8a020">NTP</div>
<div class="a g" style="left:580px;top:450px;width:100px;text-align:right;line-height:12px;color:#c8a020">228&nbsp;<span class="u">&nbsp;B</span></div>
<div class="a" style="left:407px;top:448px;width:1px;height:14px;background:#d0a828;overflow:hidden"><div class="a g" style="left:173px;top:2px;width:100px;text-align:right;line-height:12px;color:#fff">228&nbsp;<span class="u">&nbsp;B</span></div></div>
<div class="a g" style="left:659px;top:450px;width:100px;text-align:right;line-height:12px;color:#c8a020">2</div>
<div class="a g" style="left:739px;top:450px;width:100px;text-align:right;line-height:12px;color:#c8a020">0&nbsp;<span class="u">bps</span></div>
<div class="a g" style="left:819px;top:450px;width:100px;text-align:right;line-height:12px;color:#c8a020">0</div>
<div class="a" style="left:255px;top:468px;width:9px;height:9px;border:1px solid #9a9a98;background:linear-gradient(#fff,#e4e4dc 60%,#cfcfc4);border-radius:2px"><div class="a" style="left:2px;top:3px;width:5px;height:1px;background:#000"></div></div>
<svg style="left:272px;top:465px" width="15" height="14" viewBox="0 0 15 14"><rect x=".5" y=".5" width="14" height="2" rx="1" fill="#f4f8ff" stroke="#141e60"/><path d="M3.5 2.5L5 4.5M7.5 2.5L6 4.5" stroke="#141e60" stroke-width="1"/><rect x="4.5" y="10" width="2.2" height="3.5" fill="#e8f0ff" stroke="#20308a" stroke-width=".9"/><rect x="3.5" y="4.5" width="4.5" height="5" rx=".8" fill="#ecd452" stroke="#a88a18"/><rect x="4.5" y="5.5" width="2" height="2" fill="#fff6b0"/></svg>
<div class="a tn" style="left:288px;top:467px;line-height:12px;color:#9898d8">ICMP</div>
<div class="a g" style="left:580px;top:467px;width:100px;text-align:right;line-height:12px;color:#9898d8">5.927&nbsp;<span class="u">KB</span></div>
<div class="a" style="left:407px;top:465px;width:1px;height:14px;background:#a0a0e0;overflow:hidden"><div class="a g" style="left:173px;top:2px;width:100px;text-align:right;line-height:12px;color:#fff">5.927&nbsp;<span class="u">KB</span></div></div>
<div class="a g" style="left:659px;top:467px;width:100px;text-align:right;line-height:12px;color:#9898d8">72</div>
<div class="a g" style="left:739px;top:467px;width:100px;text-align:right;line-height:12px;color:#9898d8">0&nbsp;<span class="u">bps</span></div>
<div class="a g" style="left:819px;top:467px;width:100px;text-align:right;line-height:12px;color:#9898d8">0</div>
<svg style="left:292px;top:482px" width="15" height="14" viewBox="0 0 15 14"><rect x=".5" y=".5" width="14" height="2" rx="1" fill="#f4f8ff" stroke="#141e60"/><path d="M3.5 2.5L5 4.5M7.5 2.5L6 4.5" stroke="#141e60" stroke-width="1"/><rect x="4.5" y="10" width="2.2" height="3.5" fill="#e8f0ff" stroke="#20308a" stroke-width=".9"/><rect x="3.5" y="4.5" width="4.5" height="5" rx=".8" fill="#ecd452" stroke="#a88a18"/><rect x="4.5" y="5.5" width="2" height="2" fill="#fff6b0"/></svg>
<div class="a tn" style="left:308px;top:484px;line-height:12px;color:#0a4a10">Dest&nbsp;Unreach</div>
<div class="a g" style="left:580px;top:484px;width:100px;text-align:right;line-height:12px;color:#0a4a10">3.032&nbsp;<span class="u">KB</span></div>
<div class="a" style="left:407px;top:482px;width:1px;height:14px;background:#0a5a10;overflow:hidden"><div class="a g" style="left:173px;top:2px;width:100px;text-align:right;line-height:12px;color:#fff">3.032&nbsp;<span class="u">KB</span></div></div>
<div class="a g" style="left:659px;top:484px;width:100px;text-align:right;line-height:12px;color:#0a4a10">34</div>
<div class="a g" style="left:739px;top:484px;width:100px;text-align:right;line-height:12px;color:#0a4a10">0&nbsp;<span class="u">bps</span></div>
<div class="a g" style="left:819px;top:484px;width:100px;text-align:right;line-height:12px;color:#0a4a10">0</div>
<svg style="left:292px;top:499px" width="15" height="14" viewBox="0 0 15 14"><rect x=".5" y=".5" width="14" height="2" rx="1" fill="#f4f8ff" stroke="#141e60"/><path d="M3.5 2.5L5 4.5M7.5 2.5L6 4.5" stroke="#141e60" stroke-width="1"/><rect x="4.5" y="10" width="2.2" height="3.5" fill="#e8f0ff" stroke="#20308a" stroke-width=".9"/><rect x="3.5" y="4.5" width="4.5" height="5" rx=".8" fill="#ecd452" stroke="#a88a18"/><rect x="4.5" y="5.5" width="2" height="2" fill="#fff6b0"/></svg>
<div class="a tn" style="left:308px;top:501px;line-height:12px;color:#e8a030">Echo&nbsp;Req</div>
<div class="a g" style="left:580px;top:501px;width:100px;text-align:right;line-height:12px;color:#e8a030">1.523&nbsp;<span class="u">KB</span></div>
<div class="a" style="left:407px;top:499px;width:1px;height:14px;background:#e8a030;overflow:hidden"><div class="a g" style="left:173px;top:2px;width:100px;text-align:right;line-height:12px;color:#fff">1.523&nbsp;<span class="u">KB</span></div></div>
<div class="a g" style="left:659px;top:501px;width:100px;text-align:right;line-height:12px;color:#e8a030">20</div>
<div class="a g" style="left:739px;top:501px;width:100px;text-align:right;line-height:12px;color:#e8a030">0&nbsp;<span class="u">bps</span></div>
<div class="a g" style="left:819px;top:501px;width:100px;text-align:right;line-height:12px;color:#e8a030">0</div>
<svg style="left:292px;top:516px" width="15" height="14" viewBox="0 0 15 14"><rect x=".5" y=".5" width="14" height="2" rx="1" fill="#f4f8ff" stroke="#141e60"/><path d="M3.5 2.5L5 4.5M7.5 2.5L6 4.5" stroke="#141e60" stroke-width="1"/><rect x="4.5" y="10" width="2.2" height="3.5" fill="#e8f0ff" stroke="#20308a" stroke-width=".9"/><rect x="3.5" y="4.5" width="4.5" height="5" rx=".8" fill="#ecd452" stroke="#a88a18"/><rect x="4.5" y="5.5" width="2" height="2" fill="#fff6b0"/></svg>
<div class="a tn" style="left:308px;top:518px;line-height:12px;color:#78b848">Echo&nbsp;Reply</div>
<div class="a g" style="left:580px;top:518px;width:100px;text-align:right;line-height:12px;color:#78b848">1.371&nbsp;<span class="u">KB</span></div>
<div class="a" style="left:407px;top:516px;width:1px;height:14px;background:#80c050;overflow:hidden"><div class="a g" style="left:173px;top:2px;width:100px;text-align:right;line-height:12px;color:#fff">1.371&nbsp;<span class="u">KB</span></div></div>
<div class="a g" style="left:659px;top:518px;width:100px;text-align:right;line-height:12px;color:#78b848">18</div>
<div class="a g" style="left:739px;top:518px;width:100px;text-align:right;line-height:12px;color:#78b848">0&nbsp;<span class="u">bps</span></div>
<div class="a g" style="left:819px;top:518px;width:100px;text-align:right;line-height:12px;color:#78b848">0</div>
<div class="a" style="left:235px;top:536px;width:9px;height:9px;border:1px solid #9a9a98;background:linear-gradient(#fff,#e4e4dc 60%,#cfcfc4);border-radius:2px"><div class="a" style="left:2px;top:3px;width:5px;height:1px;background:#000"></div></div>
<svg style="left:252px;top:533px" width="15" height="14" viewBox="0 0 15 14"><rect x=".5" y=".5" width="14" height="2" rx="1" fill="#f4f8ff" stroke="#141e60"/><path d="M3.5 2.5L5 4.5M7.5 2.5L6 4.5" stroke="#141e60" stroke-width="1"/><rect x="4.5" y="10" width="2.2" height="3.5" fill="#e8f0ff" stroke="#20308a" stroke-width=".9"/><rect x="3.5" y="4.5" width="4.5" height="5" rx=".8" fill="#ecd452" stroke="#a88a18"/><rect x="4.5" y="5.5" width="2" height="2" fill="#fff6b0"/></svg>
<div class="a tn" style="left:268px;top:535px;line-height:12px;color:#b83a10">ARP</div>
<div class="a g" style="left:580px;top:535px;width:100px;text-align:right;line-height:12px;color:#b83a10">286.250&nbsp;<span class="u">KB</span></div>
<div class="a" style="left:407px;top:533px;width:23px;height:14px;background:#cc3c08;overflow:hidden"><div class="a g" style="left:173px;top:2px;width:100px;text-align:right;line-height:12px;color:#fff">286.250&nbsp;<span class="u">KB</span></div></div>
<div class="a g" style="left:659px;top:535px;width:100px;text-align:right;line-height:12px;color:#b83a10">4,580</div>
<div class="a g" style="left:739px;top:535px;width:100px;text-align:right;line-height:12px;color:#b83a10">2.560&nbsp;<span class="u">Kbps</span></div>
<div class="a g" style="left:819px;top:535px;width:100px;text-align:right;line-height:12px;color:#b83a10">0</div>
<svg style="left:272px;top:550px" width="15" height="14" viewBox="0 0 15 14"><rect x=".5" y=".5" width="14" height="2" rx="1" fill="#f4f8ff" stroke="#141e60"/><path d="M3.5 2.5L5 4.5M7.5 2.5L6 4.5" stroke="#141e60" stroke-width="1"/><rect x="4.5" y="10" width="2.2" height="3.5" fill="#e8f0ff" stroke="#20308a" stroke-width=".9"/><rect x="3.5" y="4.5" width="4.5" height="5" rx=".8" fill="#ecd452" stroke="#a88a18"/><rect x="4.5" y="5.5" width="2" height="2" fill="#fff6b0"/></svg>
<div class="a tn" style="left:288px;top:552px;line-height:12px;color:#0a5a18">Request</div>
<div class="a g" style="left:580px;top:552px;width:100px;text-align:right;line-height:12px;color:#0a5a18">238.313&nbsp;<span class="u">KB</span></div>
<div class="a" style="left:407px;top:550px;width:19px;height:14px;background:#08680e;overflow:hidden"><div class="a g" style="left:173px;top:2px;width:100px;text-align:right;line-height:12px;color:#fff">238.313&nbsp;<span class="u">KB</span></div></div>
<div class="a g" style="left:659px;top:552px;width:100px;text-align:right;line-height:12px;color:#0a5a18">3,813</div>
<div class="a g" style="left:739px;top:552px;width:100px;text-align:right;line-height:12px;color:#0a5a18">2.048&nbsp;<span class="u">Kbps</span></div>
<div class="a g" style="left:819px;top:552px;width:100px;text-align:right;line-height:12px;color:#0a5a18">0</div>
<svg style="left:272px;top:567px" width="15" height="14" viewBox="0 0 15 14"><rect x=".5" y=".5" width="14" height="2" rx="1" fill="#f4f8ff" stroke="#141e60"/><path d="M3.5 2.5L5 4.5M7.5 2.5L6 4.5" stroke="#141e60" stroke-width="1"/><rect x="4.5" y="10" width="2.2" height="3.5" fill="#e8f0ff" stroke="#20308a" stroke-width=".9"/><rect x="3.5" y="4.5" width="4.5" height="5" rx=".8" fill="#ecd452" stroke="#a88a18"/><rect x="4.5" y="5.5" width="2" height="2" fill="#fff6b0"/></svg>
<div class="a tn" style="left:288px;top:569px;line-height:12px;color:#1a58b0">Response</div>
<div class="a g" style="left:580px;top:569px;width:100px;text-align:right;line-height:12px;color:#1a58b0">47.938&nbsp;<span class="u">KB</span></div>
<div class="a" style="left:407px;top:567px;width:3px;height:14px;background:#1a5ec0;overflow:hidden"><div class="a g" style="left:173px;top:2px;width:100px;text-align:right;line-height:12px;color:#fff">47.938&nbsp;<span class="u">KB</span></div></div>
<div class="a g" style="left:659px;top:569px;width:100px;text-align:right;line-height:12px;color:#1a58b0">767</div>
<div class="a g" style="left:739px;top:569px;width:100px;text-align:right;line-height:12px;color:#1a58b0">512&nbsp;<span class="u">bps</span></div>
<div class="a g" style="left:819px;top:569px;width:100px;text-align:right;line-height:12px;color:#1a58b0">0</div>
<svg style="left:232px;top:584px" width="15" height="14" viewBox="0 0 15 14"><rect x=".5" y=".5" width="14" height="2" rx="1" fill="#f4f8ff" stroke="#141e60"/><path d="M3.5 2.5L5 4.5M7.5 2.5L6 4.5" stroke="#141e60" stroke-width="1"/><rect x="4.5" y="10" width="2.2" height="3.5" fill="#e8f0ff" stroke="#20308a" stroke-width=".9"/><rect x="3.5" y="4.5" width="4.5" height="5" rx=".8" fill="#ecd452" stroke="#a88a18"/><rect x="4.5" y="5.5" width="2" height="2" fill="#fff6b0"/></svg>
<div class="a tn" style="left:248px;top:586px;line-height:12px;color:#d070b8">Ethernet&nbsp;802.2</div>
<div class="a g" style="left:580px;top:586px;width:100px;text-align:right;line-height:12px;color:#d070b8">8.879&nbsp;<span class="u">KB</span></div>
<div class="a" style="left:407px;top:584px;width:1px;height:14px;background:#d878c0;overflow:hidden"><div class="a g" style="left:173px;top:2px;width:100px;text-align:right;line-height:12px;color:#fff">8.879&nbsp;<span class="u">KB</span></div></div>
<div class="a g" style="left:659px;top:586px;width:100px;text-align:right;line-height:12px;color:#d070b8">64</div>
<div class="a g" style="left:739px;top:586px;width:100px;text-align:right;line-height:12px;color:#d070b8">0&nbsp;<span class="u">bps</span></div>
<div class="a g" style="left:819px;top:586px;width:100px;text-align:right;line-height:12px;color:#d070b8">0</div>
<div class="a" style="left:0px;top:734px;width:1024px;height:34px;background:linear-gradient(#2a58b8 0px,#2a58b8 1px,#3a7eec 1px,#3a7eec 4px,#4a8ef6 5px,#3c7cf0 7px,#2a64e0 8px,#2660dc 20px,#2358d4 31px,#1a48b8 34px)"></div>
<div class="a" style="left:0;top:737px;width:96px;height:29px;border-radius:0 11px 11px 0;background:linear-gradient(#4aa84a 0px,#3a9a3a 3px,#44aa44 10px,#3c9c3c 18px,#2e842e 26px,#287a28 29px);box-shadow:inset -2px 0 2px rgba(0,40,0,.35),inset 0 1px 1px rgba(255,255,255,.3)"></div>
<svg style="left:10px;top:742px" width="20" height="19" viewBox="0 0 20 19"><path d="M1 3q4-2 8 0v7q-4-2-8 0z" fill="#f05020"/><path d="M10 3q4-2 8 0v7q-4-2-8 0z" fill="#40b030"/><path d="M1 11q4-2 8 0v7q-4-2-8 0z" fill="#2a7af0"/><path d="M10 11q4-2 8 0v7q-4-2-8 0z" fill="#f8c020"/></svg>
<div class="a" style="left:36px;top:740px;font-size:19px;font-style:italic;color:#fff;line-height:22px;text-shadow:1px 1px 1px #1a4a1a;letter-spacing:0px;font-weight:300">开始</div>
<div class="a" style="left:107px;top:745px;width:2px;height:2px;background:#1a3a98"></div>
<div class="a" style="left:109px;top:747px;width:2px;height:2px;background:#1a3a98"></div>
<div class="a" style="left:107px;top:749px;width:2px;height:2px;background:#1a3a98"></div>
<div class="a" style="left:109px;top:751px;width:2px;height:2px;background:#1a3a98"></div>
<div class="a" style="left:107px;top:753px;width:2px;height:2px;background:#1a3a98"></div>
<div class="a" style="left:109px;top:755px;width:2px;height:2px;background:#1a3a98"></div>
<div class="a" style="left:107px;top:757px;width:2px;height:2px;background:#1a3a98"></div>
<div class="a" style="left:109px;top:759px;width:2px;height:2px;background:#1a3a98"></div>
<div class="a" style="left:107px;top:761px;width:2px;height:2px;background:#1a3a98"></div>
<div class="a" style="left:109px;top:763px;width:2px;height:2px;background:#1a3a98"></div>
<div class="a" style="left:236px;top:745px;width:2px;height:2px;background:#1a3a98"></div>
<div class="a" style="left:238px;top:747px;width:2px;height:2px;background:#1a3a98"></div>
<div class="a" style="left:236px;top:749px;width:2px;height:2px;background:#1a3a98"></div>
<div class="a" style="left:238px;top:751px;width:2px;height:2px;background:#1a3a98"></div>
<div class="a" style="left:236px;top:753px;width:2px;height:2px;background:#1a3a98"></div>
<div class="a" style="left:238px;top:755px;width:2px;height:2px;background:#1a3a98"></div>
<div class="a" style="left:236px;top:757px;width:2px;height:2px;background:#1a3a98"></div>
<div class="a" style="left:238px;top:759px;width:2px;height:2px;background:#1a3a98"></div>
<div class="a" style="left:236px;top:761px;width:2px;height:2px;background:#1a3a98"></div>
<div class="a" style="left:238px;top:763px;width:2px;height:2px;background:#1a3a98"></div>
<div class="a" style="left:699px;top:745px;width:2px;height:2px;background:#1a3a98"></div>
<div class="a" style="left:701px;top:747px;width:2px;height:2px;background:#1a3a98"></div>
<div class="a" style="left:699px;top:749px;width:2px;height:2px;background:#1a3a98"></div>
<div class="a" style="left:701px;top:751px;width:2px;height:2px;background:#1a3a98"></div>
<div class="a" style="left:699px;top:753px;width:2px;height:2px;background:#1a3a98"></div>
<div class="a" style="left:701px;top:755px;width:2px;height:2px;background:#1a3a98"></div>
<div class="a" style="left:699px;top:757px;width:2px;height:2px;background:#1a3a98"></div>
<div class="a" style="left:701px;top:759px;width:2px;height:2px;background:#1a3a98"></div>
<div class="a" style="left:699px;top:761px;width:2px;height:2px;background:#1a3a98"></div>
<div class="a" style="left:701px;top:763px;width:2px;height:2px;background:#1a3a98"></div>
<svg style="left:117px;top:745px" width="16" height="16"><ellipse cx="8" cy="10" rx="5" ry="5" fill="#f0f0f0"/><path d="M4 2q4 0 6 5" stroke="#d08040" stroke-width="2" fill="none"/><circle cx="9" cy="9" r="2" fill="#e08030"/></svg>
<svg style="left:141px;top:745px" width="16" height="16"><circle cx="8" cy="8" r="7.5" fill="#2a60c0"/><circle cx="8" cy="8" r="6" fill="#4a90e0"/><path d="M4.5 12V6.5q0-1.5 1.5-1.5h4q1.5 0 1.5 1.5V12M8 12V7" stroke="#fff" stroke-width="2" fill="none"/></svg>
<svg style="left:165px;top:745px" width="16" height="16"><circle cx="8" cy="8" r="7.5" fill="#f0f0f0"/><path d="M8 .5a7.5 7.5 0 0 1 7.5 7.5" stroke="#40a040" stroke-width="2" fill="none"/><path d="M.5 8a7.5 7.5 0 0 1 7.5-7.5" stroke="#e04040" stroke-width="2" fill="none"/><circle cx="8" cy="8" r="4" fill="#2040a0"/><path d="M6.5 5.5v5l4-2.5z" fill="#fff"/></svg>
<svg style="left:188px;top:745px" width="16" height="16"><rect x="1" y="2" width="12" height="12" rx="2" fill="#e8f0f8" stroke="#3a70c0"/><path d="M4 8a3 3 0 0 1 6 0" stroke="#2a60c0" stroke-width="2" fill="none"/><path d="M8 6l6-5" stroke="#e04020" stroke-width="1.2"/></svg>
<svg style="left:218px;top:744px" width="10" height="7"><path d="M1 .5l3 3-3 3M5 .5l3 3-3 3" stroke="#c8d8f8" fill="none"/></svg>
<div class="a" style="left:244px;top:741px;width:54px;height:24px;border-radius:3px;background:linear-gradient(#4a90f8,#3a80f0 15%,#3278ec 80%,#2a68d8);box-shadow:inset -1px -1px 1px rgba(0,0,0,.25),inset 1px 1px 1px rgba(255,255,255,.3)"></div>
<div class="a" style="left:271px;top:747px;color:#fff;line-height:14px"><span class="m" style="font-size:11px;-webkit-text-stroke-width:0">S.</span></div>
<div class="a" style="left:300px;top:741px;width:54px;height:24px;border-radius:3px;background:linear-gradient(#4a90f8,#3a80f0 15%,#3278ec 80%,#2a68d8);box-shadow:inset -1px -1px 1px rgba(0,0,0,.25),inset 1px 1px 1px rgba(255,255,255,.3)"></div>
<div class="a" style="left:327px;top:747px;color:#fff;line-height:14px"><span class="m" style="font-size:11px;-webkit-text-stroke-width:0">E.</span></div>
<div class="a" style="left:356px;top:741px;width:54px;height:24px;border-radius:3px;background:linear-gradient(#4a90f8,#3a80f0 15%,#3278ec 80%,#2a68d8);box-shadow:inset -1px -1px 1px rgba(0,0,0,.25),inset 1px 1px 1px rgba(255,255,255,.3)"></div>
<div class="a" style="left:382px;top:746px;color:#fff;line-height:14px">与</div>
<div class="a" style="left:412px;top:741px;width:54px;height:24px;border-radius:3px;background:linear-gradient(#4a90f8,#3a80f0 15%,#3278ec 80%,#2a68d8);box-shadow:inset -1px -1px 1px rgba(0,0,0,.25),inset 1px 1px 1px rgba(255,255,255,.3)"></div>
<div class="a" style="left:438px;top:746px;color:#fff;line-height:14px">怎</div>
<div class="a" style="left:468px;top:741px;width:54px;height:24px;border-radius:3px;background:linear-gradient(#4a90f8,#3a80f0 15%,#3278ec 80%,#2a68d8);box-shadow:inset -1px -1px 1px rgba(0,0,0,.25),inset 1px 1px 1px rgba(255,255,255,.3)"></div>
<div class="a" style="left:494px;top:746px;color:#fff;line-height:14px">命</div>
<div class="a" style="left:524px;top:741px;width:54px;height:24px;border-radius:3px;background:linear-gradient(#4a90f8,#3a80f0 15%,#3278ec 80%,#2a68d8);box-shadow:inset -1px -1px 1px rgba(0,0,0,.25),inset 1px 1px 1px rgba(255,255,255,.3)"></div>
<div class="a" style="left:551px;top:747px;color:#fff;line-height:14px"><span class="m" style="font-size:11px;-webkit-text-stroke-width:0">C.</span></div>
<div class="a" style="left:579px;top:741px;width:57px;height:24px;border-radius:3px;background:linear-gradient(#1a44a8,#1e4cb8 20%,#2050c0);box-shadow:inset 1px 1px 2px rgba(0,0,0,.5)"></div>
<div class="a" style="left:605px;top:746px;color:#fff;line-height:14px">工</div>
<div class="a" style="left:637px;top:741px;width:54px;height:24px;border-radius:3px;background:linear-gradient(#4a90f8,#3a80f0 15%,#3278ec 80%,#2a68d8);box-shadow:inset -1px -1px 1px rgba(0,0,0,.25),inset 1px 1px 1px rgba(255,255,255,.3)"></div>
<div class="a" style="left:664px;top:747px;color:#fff;line-height:14px"><span class="m" style="font-size:11px;-webkit-text-stroke-width:0">K.</span></div>
<svg style="left:254px;top:745px" width="16" height="16"><path d="M1 3l6-2 3 3-2 2z" fill="#606060"/><rect x="4" y="6" width="8" height="9" fill="#f0f0f0" stroke="#a04040"/><path d="M6 7v7M8 7v7M10 7v7" stroke="#d03030"/><rect x="2" y="10" width="3" height="5" fill="#f0d020"/></svg>
<svg style="left:309px;top:745px" width="16" height="16"><path d="M1 4h5l1 2h7v8H1z" fill="#f0c840" stroke="#a07810" stroke-width=".6"/><path d="M5 8a3 3 0 1 0 6 0" fill="#e8d890"/></svg>
<svg style="left:366px;top:745px" width="16" height="16"><path d="M2 3h10v10l-3 2H2z" fill="#f8e040" stroke="#a08810" stroke-width=".6"/><circle cx="4" cy="3" r="2" fill="#e03020"/></svg>
<svg style="left:421px;top:745px" width="16" height="16"><circle cx="8" cy="8" r="7.5" fill="#1a4aa0"/><circle cx="8" cy="8" r="6" fill="#4a88d8"/><path d="M4.5 12V6.5q0-1.5 1.5-1.5h4q1.5 0 1.5 1.5V12M8 12V7" stroke="#fff" stroke-width="2" fill="none"/></svg>
<div class="a" style="left:477px;top:747px;width:17px;height:12px;background:#000;border:1px solid #c0c0c0;color:#fff;font-size:7px;line-height:10px;font-weight:bold;font-family:'Liberation Sans',sans-serif">C:\</div>
<svg style="left:532px;top:744px" width="18" height="17"><circle cx="6" cy="6" r="4" fill="#804020"/><circle cx="12" cy="6" r="4" fill="#a05030"/><circle cx="6" cy="8" r="3" fill="#f8d0a0"/><circle cx="12" cy="8" r="3" fill="#f8d0a0"/><path d="M1 16q5-6 8 0M9 16q5-6 8 0" fill="#40a040"/></svg>
<svg style="left:588px;top:744px" width="16" height="16"><circle cx="8" cy="8" r="7" fill="#3a90e8"/><circle cx="10" cy="8" r="4.5" fill="#1e4cb8"/><circle cx="10" cy="8" r="2.5" fill="#7ac0f8"/></svg>
<svg style="left:646px;top:744px" width="16" height="16"><path d="M2 2l3 13h6l3-13" fill="#e8c070"/><path d="M4 2l2 12M8 1v13M12 2l-2 12" stroke="#d04040" stroke-width="1.5"/><path d="M6 3l1 10" stroke="#40a040" stroke-width="1.5"/></svg>
<div class="a" style="left:713px;top:747px;color:#fff;line-height:12px"><span class="m" style="font-size:11px;font-weight:bold">EN</span></div>
<div class="a" style="left:735px;top:745px;width:13px;height:15px;background:#fffbd8;border:1px solid #000;border-radius:2px;font-weight:bold;font-size:11px;line-height:13px;text-align:center">?</div>
<div class="a" style="left:767px;top:738px;width:257px;height:30px;background:linear-gradient(#16a4fa 0px,#12a0f6 3px,#0e94ee 20px,#0c88e4 30px);border-left:1px solid #0a3a98;border-top:1px solid #0a5ad0;box-shadow:inset 1px 0 0 #40b8ff"></div>
<svg style="left:779px;top:744px" width="16" height="16" viewBox="0 0 16 16"><circle cx="8" cy="8" r="7.5" fill="#1a4aa0"/><circle cx="8" cy="8" r="6" fill="#4a88d8"/><path d="M4.5 12V6.5q0-1.5 1.5-1.5h4q1.5 0 1.5 1.5V12M8 12V7" stroke="#fff" stroke-width="2" fill="none"/></svg>
<svg style="left:796px;top:744px" width="16" height="16" viewBox="0 0 16 16"><rect x="0" y="0" width="16" height="8" fill="#e02020"/><rect x="0" y="8" width="16" height="8" fill="#1a2aa0"/><path d="M3 2h4M10 2v5M12 2l-2 3" stroke="#fff"/><path d="M3 10v4h3M8 14v-4h4v4" stroke="#fff" stroke-width="1.4" fill="none"/></svg>
<svg style="left:814px;top:744px" width="16" height="16" viewBox="0 0 16 16"><ellipse cx="8" cy="8" rx="5" ry="7" fill="#000"/><ellipse cx="8" cy="10" rx="3.5" ry="4.5" fill="#fff"/><path d="M4 7h8l-4 2z" fill="#f0a000"/><path d="M2 14l3 1 6 0 3-1" stroke="#e02020" stroke-width="2"/></svg>
<svg style="left:832px;top:744px" width="16" height="16" viewBox="0 0 16 16"><path d="M1 8q0-7 7-7t7 7-7 7H3z" fill="#50c040"/><path d="M5 8l2 2 4-4" stroke="#fff" stroke-width="1.6" fill="none"/></svg>
<svg style="left:850px;top:744px" width="16" height="16" viewBox="0 0 16 16"><circle cx="8" cy="8" r="7" fill="#f0c020" stroke="#c09010"/><circle cx="12" cy="12" r="4" fill="#e02020"/><path d="M10 10l4 4M14 10l-4 4" stroke="#fff" stroke-width="1.2"/><path d="M4 9l3-4 2 3" stroke="#306020" fill="none"/></svg>
<svg style="left:868px;top:744px" width="16" height="16" viewBox="0 0 16 16"><circle cx="8" cy="8" r="7" fill="#d8b040" stroke="#806010"/><circle cx="8" cy="8" r="4.5" fill="none" stroke="#604010" stroke-width="1.2"/><path d="M4 4l8 8M12 4l-8 8" stroke="#604010"/></svg>
<svg style="left:886px;top:744px" width="16" height="16" viewBox="0 0 16 16"><circle cx="5" cy="5" r="3" fill="#80c0f0"/><circle cx="9" cy="9" r="3" fill="#40a040"/><circle cx="12" cy="12" r="3.5" fill="#e02020"/><path d="M10.5 10.5l3 3M13.5 10.5l-3 3" stroke="#fff"/></svg>
<svg style="left:905px;top:744px" width="16" height="16" viewBox="0 0 16 16"><ellipse cx="7" cy="8" rx="6" ry="6" fill="#505060"/><ellipse cx="6" cy="7" rx="3" ry="3" fill="#a0a0b0"/><path d="M10 14l5-4" stroke="#c0c0d0" stroke-width="1.4"/></svg>
<svg style="left:922px;top:744px" width="16" height="16" viewBox="0 0 16 16"><rect x="0" y="0" width="16" height="16" fill="#e02020"/><circle cx="8" cy="8" r="6" fill="#fff"/><path d="M10 2L5 9h4l-3 6" stroke="#e02020" stroke-width="2" fill="none"/></svg>
<svg style="left:940px;top:744px" width="16" height="16" viewBox="0 0 16 16"><rect x="0" y="0" width="16" height="16" fill="#000a60"/><circle cx="8" cy="8" r="2" fill="#f0d020"/><path d="M4 4a6 6 0 0 0 0 8M12 4a6 6 0 0 1 0 8" stroke="#f0d020" stroke-width="1.2" fill="none"/></svg>
<svg style="left:958px;top:744px" width="16" height="16" viewBox="0 0 16 16"><path d="M1 5h14v8H1z" fill="#80c040"/><path d="M3 9a5 3 0 0 1 10 0" stroke="#fff" stroke-width="1.2" fill="none"/></svg>
<div class="a" style="left:981px;top:746px;color:#fff;line-height:14px;font-size:12px;letter-spacing:.3px">16:42</div></body></html>
